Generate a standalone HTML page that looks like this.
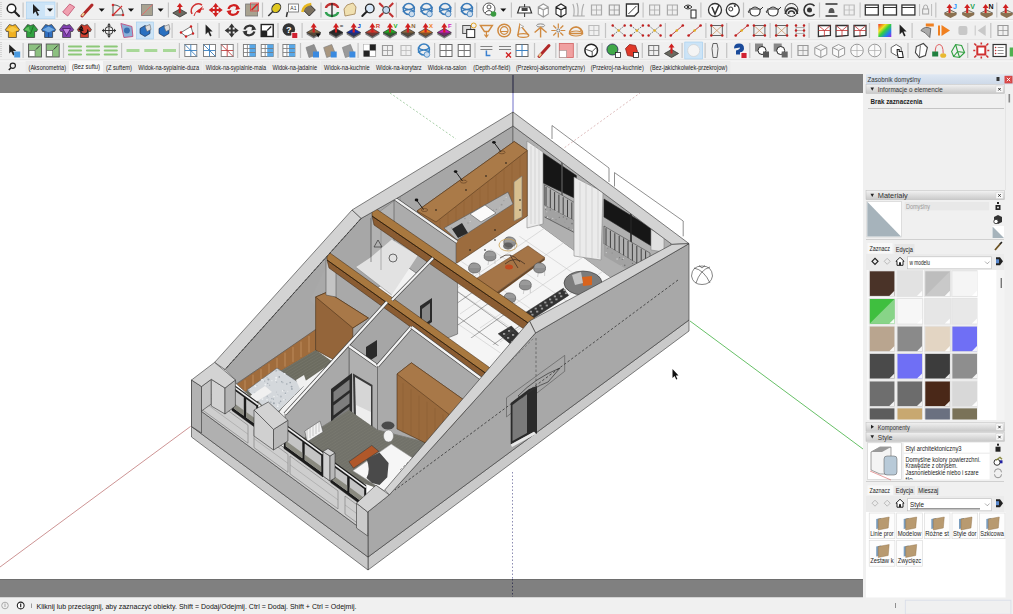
<!DOCTYPE html>
<html><head><meta charset="utf-8"><style>
html,body{margin:0;padding:0;width:1013px;height:614px;overflow:hidden;background:#f0f0f0}
svg{display:block;font-family:"Liberation Sans",sans-serif}
</style></head><body>
<svg width="1013" height="614" viewBox="0 0 1013 614">
<rect x="0" y="0" width="1013" height="614" fill="#f0f0f0"/>
<rect x="0" y="19.4" width="1013" height="0.8" fill="#d6d6d6"/><rect x="0" y="20.2" width="1013" height="1" fill="#fbfbfb"/>
<rect x="0" y="39.6" width="1013" height="0.8" fill="#d6d6d6"/><rect x="0" y="40.4" width="1013" height="1" fill="#fbfbfb"/>
<rect x="0" y="59.6" width="1013" height="0.8" fill="#d6d6d6"/><rect x="0" y="60.4" width="1013" height="1" fill="#fbfbfb"/>
<rect x="0.5" y="2" width="1" height="1" fill="#b8b8b8"/>
<rect x="0.5" y="4" width="1" height="1" fill="#b8b8b8"/>
<rect x="0.5" y="6" width="1" height="1" fill="#b8b8b8"/>
<rect x="0.5" y="8" width="1" height="1" fill="#b8b8b8"/>
<rect x="0.5" y="10" width="1" height="1" fill="#b8b8b8"/>
<rect x="0.5" y="12" width="1" height="1" fill="#b8b8b8"/>
<rect x="0.5" y="14" width="1" height="1" fill="#b8b8b8"/>
<rect x="0.5" y="16" width="1" height="1" fill="#b8b8b8"/>
<rect x="22.5" y="2.5" width="1.2" height="15" fill="#c4c4c4"/>
<rect x="56.5" y="2.5" width="1.2" height="15" fill="#c4c4c4"/>
<rect x="167.8" y="2.5" width="1.2" height="15" fill="#c4c4c4"/>
<rect x="261.9" y="2.5" width="1.2" height="15" fill="#c4c4c4"/>
<rect x="320.4" y="2.5" width="1.2" height="15" fill="#c4c4c4"/>
<rect x="395.8" y="2.5" width="1.2" height="15" fill="#c4c4c4"/>
<rect x="454.5" y="2.5" width="1.2" height="15" fill="#c4c4c4"/>
<rect x="476.1" y="2.5" width="1.2" height="15" fill="#c4c4c4"/>
<rect x="510.8" y="2.5" width="1.2" height="15" fill="#c4c4c4"/>
<rect x="642.5" y="2.5" width="1.2" height="15" fill="#c4c4c4"/>
<rect x="700.3" y="2.5" width="1.2" height="15" fill="#c4c4c4"/>
<rect x="742.9" y="2.5" width="1.2" height="15" fill="#c4c4c4"/>
<rect x="818.9" y="2.5" width="1.2" height="15" fill="#c4c4c4"/>
<rect x="859.5" y="2.5" width="1.2" height="15" fill="#c4c4c4"/>
<rect x="935.2" y="2.5" width="1.2" height="15" fill="#c4c4c4"/>
<rect x="996.2" y="2.5" width="1.2" height="15" fill="#c4c4c4"/>
<rect x="26.3" y="2" width="28.7" height="16.7" fill="#cce4f7" stroke="#a8d0f0" stroke-width="0.6"/>
<rect x="45" y="5" width="9" height="11" fill="#e6f0f8"/>
<g transform="translate(13.0,10.0)"><circle cx="-1.5" cy="-1.5" r="4.3" fill="#fff" stroke="#222" stroke-width="1.5"/><path d="M1.5 1.5 L6 6" stroke="#222" stroke-width="2.2" stroke-linecap="round"/></g>
<g transform="translate(36.0,10.0)"><path d="M-3 -6 L-3 4 L-0.5 1.5 L1.5 6 L3 5 L1 1 L4 1 Z" fill="#222"/></g>
<g transform="translate(50.0,10.0)"><path d="M-3 -1.5 L3 -1.5 L0 1.8 Z" fill="#111"/></g>
<g transform="translate(68.7,10.0)"><path d="M-6 2 L1 -6 L6 -3 L-1 6 Z" fill="#f0a0b0" stroke="#c05070" stroke-width="0.8"/></g>
<g transform="translate(88.0,10.0)"><path d="M-6 6 L4 -5" stroke="#b02828" stroke-width="3" stroke-linecap="round"/><path d="M-6 6 L-4 3" stroke="#e8d090" stroke-width="2"/></g>
<g transform="translate(101.7,10.0)"><path d="M-3 -1.5 L3 -1.5 L0 1.8 Z" fill="#111"/></g>
<g transform="translate(118.0,10.0)"><path d="M-5 5 L-5 -5 A9 9 0 0 1 5 5 Z" fill="none" stroke="#555" stroke-width="1"/><path d="M-5 5 L4 -4" stroke="#d03030" stroke-width="1.2"/><circle cx="-5" cy="5" r="1.3" fill="#d03030"/><circle cx="-5" cy="-5" r="1.3" fill="#d03030"/><circle cx="5" cy="5" r="1.3" fill="#d03030"/></g>
<g transform="translate(131.0,10.0)"><path d="M-3 -1.5 L3 -1.5 L0 1.8 Z" fill="#111"/></g>
<g transform="translate(147.0,10.0)"><rect x="-5.5" y="-5.5" width="11" height="11" fill="#a8a290" stroke="#777" stroke-width="0.8"/><path d="M-5.5 5.5 L5.5 -5.5" stroke="#e07070" stroke-width="1"/></g>
<g transform="translate(160.6,10.0)"><path d="M-3 -1.5 L3 -1.5 L0 1.8 Z" fill="#111"/></g>
<g transform="translate(179.8,10.0)"><path d="M-7 3 L0 -1 L7 3 L0 7 Z" fill="#6a6a60" stroke="#333" stroke-width="0.8"/><path d="M0 3 L0 -5" stroke="#d02020" stroke-width="2"/><path d="M-3 -3 L0 -7 L3 -3 Z" fill="#d02020"/></g>
<g transform="translate(198.0,10.0)"><path d="M-6 4 A7 7 0 0 1 4 -5" fill="none" stroke="#d03030" stroke-width="1.5"/><path d="M-2 2 L5 -4 L2 3 Z" fill="#d02020"/><path d="M-4 6 A9 9 0 0 1 6 -1" fill="none" stroke="#d03030" stroke-width="1"/></g>
<g transform="translate(215.7,10.0)"><path d="M0 -7 L3 -3 L1 -3 L1 -1 L3 -1 L3 -3 L7 0 L3 3 L3 1 L1 1 L1 3 L3 3 L0 7 L-3 3 L-1 3 L-1 1 L-3 1 L-3 3 L-7 0 L-3 -3 L-3 -1 L-1 -1 L-1 -3 L-3 -3 Z" fill="#d02020"/></g>
<g transform="translate(233.4,10.0)"><path d="M-5 -1 A5.5 5.5 0 0 1 5 -2" fill="none" stroke="#d02020" stroke-width="2.2"/><path d="M5 1 A5.5 5.5 0 0 1 -5 2" fill="none" stroke="#d02020" stroke-width="2.2"/><path d="M3 -5 L7 -1 L2 0 Z" fill="#d02020"/><path d="M-3 5 L-7 1 L-2 0 Z" fill="#d02020"/></g>
<g transform="translate(251.6,10.0)"><rect x="-6" y="-6" width="12" height="12" fill="#a8a290" stroke="#777" stroke-width="0.8"/><rect x="-1" y="-7" width="8" height="8" fill="none" stroke="#e04040" stroke-width="0.8"/><path d="M0 0 L6 -6" stroke="#e02020" stroke-width="1.6"/></g>
<g transform="translate(274.3,10.0)"><path d="M-6 6 L0 0" stroke="#333" stroke-width="1.5"/><ellipse cx="2" cy="-2" rx="4" ry="5" transform="rotate(40 2 -2)" fill="#e0c820" stroke="#333" stroke-width="1"/></g>
<g transform="translate(292.4,10.0)"><rect x="-4" y="-6" width="10" height="8" fill="#fff" stroke="#666" stroke-width="0.8"/><path d="M-5 2 L-6 7" stroke="#333" stroke-width="1.5"/><text x="1" y="0" font-size="5" fill="#333" text-anchor="middle" font-family="Liberation Sans">A1</text></g>
<g transform="translate(309.3,10.0)"><path d="M-6 0 L0 -6 L6 0 L0 6 Z" fill="#7a7060" stroke="#333" stroke-width="1"/><path d="M-7 2 Q-6 -5 2 -6" fill="none" stroke="#e8b820" stroke-width="2.5"/></g>
<g transform="translate(332.0,10.0)"><path d="M-6 -2 A6 4 0 0 1 6 -2" fill="none" stroke="#c03030" stroke-width="2.5"/><path d="M6 2 A6 4 0 0 1 -6 2" fill="none" stroke="#30a050" stroke-width="2.5"/><path d="M0 -7 L0 7" stroke="#222" stroke-width="1.3"/></g>
<g transform="translate(350.0,10.0)"><path d="M-5 6 L-6 -1 L-3 -5 L3 -7 L6 -3 L5 4 Z" fill="#f0e0b0" stroke="#a08050" stroke-width="0.8"/></g>
<g transform="translate(368.3,10.0)"><circle cx="1.5" cy="-1.5" r="4.3" fill="#d8e8f8" stroke="#222" stroke-width="1.3"/><path d="M-1.5 1.5 L-6 6" stroke="#222" stroke-width="2" stroke-linecap="round"/></g>
<g transform="translate(386.2,10.0)"><circle cx="0" cy="0" r="3.5" fill="#c0d8f0" stroke="#333" stroke-width="1"/><path d="M-7 -7 L-3 -3 M7 -7 L3 -3 M-7 7 L-3 3 M7 7 L3 3" stroke="#c03030" stroke-width="2"/></g>
<g transform="translate(408.8,10.0)"><circle cx="0" cy="-1" r="5.5" fill="none" stroke="#3a7ab8" stroke-width="1.6"/><path d="M-6 -3 Q0 2 6 -3 M-6 2 Q0 -3 6 2" stroke="#3a7ab8" stroke-width="1.6" fill="none"/><circle cx="3" cy="4" r="2.8" fill="#cde" stroke="#3a7ab8" stroke-width="0.8"/></g>
<g transform="translate(426.5,10.0)"><circle cx="0" cy="-1" r="5.5" fill="none" stroke="#3a7ab8" stroke-width="1.6"/><path d="M-6 -3 Q0 2 6 -3 M-6 2 Q0 -3 6 2" stroke="#3a7ab8" stroke-width="1.6" fill="none"/><circle cx="3" cy="4" r="2.8" fill="#cde" stroke="#3a7ab8" stroke-width="0.8"/></g>
<g transform="translate(445.2,10.0)"><circle cx="0" cy="-1" r="5.5" fill="none" stroke="#3a7ab8" stroke-width="1.6"/><path d="M-6 -3 Q0 2 6 -3 M-6 2 Q0 -3 6 2" stroke="#3a7ab8" stroke-width="1.6" fill="none"/><circle cx="3" cy="4" r="2.8" fill="#cde" stroke="#3a7ab8" stroke-width="0.8"/></g>
<g transform="translate(466.9,10.0)"><circle cx="0" cy="-1" r="5.5" fill="none" stroke="#3a7ab8" stroke-width="1.6"/><path d="M-6 -3 Q0 2 6 -3 M-6 2 Q0 -3 6 2" stroke="#3a7ab8" stroke-width="1.6" fill="none"/><circle cx="3" cy="4" r="2.8" fill="#cde" stroke="#3a7ab8" stroke-width="0.8"/></g>
<g transform="translate(490.0,10.0)"><circle cx="-1" cy="-1" r="6" fill="#fff" stroke="#555" stroke-width="1"/><circle cx="-1" cy="-3" r="2" fill="none" stroke="#555" stroke-width="1"/><path d="M-5 3 Q-1 -2 3 3" fill="none" stroke="#555" stroke-width="1"/><circle cx="3.5" cy="4" r="2.8" fill="#3a9a40"/></g>
<g transform="translate(503.3,10.0)"><path d="M-3 -1.5 L3 -1.5 L0 1.8 Z" fill="#111"/></g>
<g transform="translate(524.6,10.0)"><path d="M-7 3 L-5 -3 L5 -3 L7 3 Z" fill="#fff" stroke="#333" stroke-width="1.2"/><rect x="-3" y="-2" width="6" height="3" fill="#444"/><path d="M0 3 L0 7 M0 -3 L0 -6" stroke="#333" stroke-width="1"/></g>
<g transform="translate(543.3,10.0)"><path d="M-5 -3 L0 -6 L5 -3 L5 4 L0 7 L-5 4 Z M-5 -3 L0 0 L5 -3 M0 0 L0 7" fill="#fff" stroke="#999" stroke-width="1.1"/></g>
<g transform="translate(561.0,10.0)"><path d="M-5 -3 L0 -6 L5 -3 L5 4 L0 7 L-5 4 Z M-5 -3 L0 0 L5 -3 M0 0 L0 7" fill="#fff" stroke="#222" stroke-width="1.1"/></g>
<g transform="translate(578.8,10.0)"><path d="M-5 6 Q-4 -2 -6 -6 M-1 6 Q0 -3 -2 -7 M3 6 Q3 -2 5 -6 M-6 6 L6 6" fill="none" stroke="#aaa" stroke-width="1.1"/></g>
<g transform="translate(596.5,10.0)"><path d="M-5 -5 L5 -5 L5 5 L-5 5 Z" fill="none" stroke="#aaa" stroke-width="1.2"/><path d="M-5 0 L5 0 M0 -5 L0 5" stroke="#aaa" stroke-width="0.8"/></g>
<g transform="translate(614.3,10.0)"><path d="M-5 -5 L5 -5 L5 5 L-5 5 Z" fill="none" stroke="#999" stroke-width="1.2"/><path d="M-5 0 L5 0 M0 -5 L0 5" stroke="#999" stroke-width="0.8"/></g>
<g transform="translate(632.4,10.0)"><path d="M-6 -6 L6 -6 L6 2 L2 6 L-6 6 Z" fill="#fff" stroke="#333" stroke-width="1.3"/><path d="M-4 4 L4 -4" stroke="#333" stroke-width="1"/></g>
<g transform="translate(654.6,10.0)"><path d="M-5 -5 L5 -5 L5 5 L-5 5 Z" fill="none" stroke="#aaa" stroke-width="1.2"/><path d="M-5 0 L5 0 M0 -5 L0 5" stroke="#aaa" stroke-width="0.8"/></g>
<g transform="translate(672.4,10.0)"><path d="M-5 -5 L5 -5 L5 5 L-5 5 Z" fill="none" stroke="#aaa" stroke-width="1.2"/><path d="M-5 0 L5 0 M0 -5 L0 5" stroke="#aaa" stroke-width="0.8"/></g>
<g transform="translate(691.0,10.0)"><path d="M-7 -3 Q-3 -7 1 -3 Q-3 1 -7 -3 Z" fill="#fff" stroke="#333" stroke-width="1"/><circle cx="-3" cy="-3" r="1.3" fill="#333"/><rect x="0" y="0" width="5" height="8" fill="#fff" stroke="#333" stroke-width="1.1"/></g>
<g transform="translate(715.0,10.0)"><circle cx="0" cy="0" r="6.5" fill="#fff" stroke="#333" stroke-width="1.3"/><path d="M-3 -3 L0 4 L4 -5" fill="none" stroke="#333" stroke-width="1.6"/></g>
<g transform="translate(732.8,10.0)"><circle cx="0" cy="0" r="6.5" fill="#fff" stroke="#333" stroke-width="1.3"/><circle cx="-2" cy="-1" r="2" fill="none" stroke="#333" stroke-width="1"/><circle cx="2" cy="-4" r="1" fill="#333"/></g>
<g transform="translate(755.0,10.0)"><path d="M-5 -1 Q-6 6 0 6 Q6 6 5 -1 Z" fill="#fff" stroke="#333" stroke-width="1.2"/><path d="M-4 -1 Q0 -5 4 -1 M5 0 L8 -3 M-5 0 Q-8 1 -6 3" fill="none" stroke="#333" stroke-width="1"/></g>
<g transform="translate(773.0,10.0)"><path d="M-5 -1 Q-6 6 0 6 Q6 6 5 -1 Z" fill="#fff" stroke="#333" stroke-width="1.2"/><path d="M-4 -1 Q0 -5 4 -1 M5 0 L8 -3 M-5 0 Q-8 1 -6 3" fill="none" stroke="#333" stroke-width="1"/></g>
<g transform="translate(791.4,10.0)"><path d="M-6 4 A6 6 0 0 1 6 4" fill="none" stroke="#333" stroke-width="1.8"/><path d="M-3 4 A3 3 0 0 1 3 4" fill="none" stroke="#333" stroke-width="1.5"/><circle cx="0" cy="0" r="6.5" fill="none" stroke="#333" stroke-width="1"/></g>
<g transform="translate(809.5,10.0)"><path d="M5 -4 A6 6 0 1 0 5 4" fill="none" stroke="#333" stroke-width="1.6"/><circle cx="0" cy="0" r="2.5" fill="#333"/></g>
<g transform="translate(831.5,10.0)"><path d="M-6 -6 L6 -6 M-6 6 L6 6" stroke="#333" stroke-width="1.3"/><path d="M-3 3 Q-3 -2 0 -2 Q3 -2 3 3 Z" fill="#555"/></g>
<g transform="translate(849.2,10.0)"><path d="M-5 -5 L5 -5 L5 5 L-5 5 Z" fill="none" stroke="#bbb" stroke-width="1.2"/><path d="M-5 0 L5 0 M0 -5 L0 5" stroke="#bbb" stroke-width="0.8"/></g>
<g transform="translate(871.8,10.0)"><rect x="-6.5" y="-5" width="13" height="10" fill="#fff" stroke="#333" stroke-width="1.3"/><path d="M-6.5 -2.5 L6.5 -2.5" stroke="#333" stroke-width="1"/></g>
<g transform="translate(890.0,10.0)"><rect x="-6.5" y="-5" width="13" height="10" fill="#fff" stroke="#333" stroke-width="1.3"/><path d="M-6.5 -2.5 L6.5 -2.5" stroke="#333" stroke-width="1"/></g>
<g transform="translate(908.4,10.0)"><rect x="-6.5" y="-5" width="13" height="10" fill="#fff" stroke="#333" stroke-width="1.3"/><path d="M-6.5 -2.5 L6.5 -2.5" stroke="#333" stroke-width="1"/></g>
<g transform="translate(925.6,10.0)"><path d="M-6 -6 L-6 6 M6 -6 L6 6" stroke="#bbb" stroke-width="1"/><rect x="-3" y="-1" width="6" height="5" fill="none" stroke="#aaa" stroke-width="1.1"/><path d="M-2 -1 L-2 -3 A2 2 0 0 1 2 -3 L2 -1" fill="none" stroke="#aaa"/></g>
<g transform="translate(950.5,10.0)"><path d="M-6 3 L0 0 L6 3 L0 6 Z" fill="#d8c8a8" stroke="#555" stroke-width="0.8"/><path d="M-6 3 L-6 5 L0 8 L6 5 L6 3" fill="#8a7050"/><path d="M-1 3 L-1 -3" stroke="#d02020" stroke-width="2"/><path d="M-4 -2 L-1 -6 L2 -2 Z" fill="#d02020"/><text x="4.5" y="-1" font-size="7" font-weight="bold" fill="#1e90ff" text-anchor="middle" font-family="Liberation Sans">J</text></g>
<g transform="translate(968.2,10.0)"><path d="M-6 3 L0 0 L6 3 L0 6 Z" fill="#d8c8a8" stroke="#555" stroke-width="0.8"/><path d="M-6 3 L-6 5 L0 8 L6 5 L6 3" fill="#8a7050"/><path d="M-1 3 L-1 -3" stroke="#d02020" stroke-width="2"/><path d="M-4 -2 L-1 -6 L2 -2 Z" fill="#d02020"/><text x="4.5" y="-1" font-size="7" font-weight="bold" fill="#20a050" text-anchor="middle" font-family="Liberation Sans">V</text></g>
<g transform="translate(986.6,10.0)"><path d="M-6 3 L0 0 L6 3 L0 6 Z" fill="#d8c8a8" stroke="#555" stroke-width="0.8"/><path d="M-6 3 L-6 5 L0 8 L6 5 L6 3" fill="#8a7050"/><path d="M-1 3 L-1 -3" stroke="#d02020" stroke-width="2"/><path d="M-4 -2 L-1 -6 L2 -2 Z" fill="#d02020"/><text x="4.5" y="-1" font-size="7" font-weight="bold" fill="#111" text-anchor="middle" font-family="Liberation Sans">N</text></g>
<g transform="translate(1006.7,10.0)"><path d="M-6 3 L0 0 L6 3 L0 6 Z" fill="#d8c8a8" stroke="#555" stroke-width="0.8"/><path d="M-6 3 L-6 5 L0 8 L6 5 L6 3" fill="#8a7050"/><path d="M-1 3 L-1 -3" stroke="#d02020" stroke-width="2"/><path d="M-4 -2 L-1 -6 L2 -2 Z" fill="#d02020"/><text x="4.5" y="-1" font-size="7" font-weight="bold" fill="#333" text-anchor="middle" font-family="Liberation Sans"></text></g>
<rect x="0.5" y="22" width="1" height="1" fill="#b8b8b8"/>
<rect x="0.5" y="24" width="1" height="1" fill="#b8b8b8"/>
<rect x="0.5" y="26" width="1" height="1" fill="#b8b8b8"/>
<rect x="0.5" y="28" width="1" height="1" fill="#b8b8b8"/>
<rect x="0.5" y="30" width="1" height="1" fill="#b8b8b8"/>
<rect x="0.5" y="32" width="1" height="1" fill="#b8b8b8"/>
<rect x="0.5" y="34" width="1" height="1" fill="#b8b8b8"/>
<rect x="0.5" y="36" width="1" height="1" fill="#b8b8b8"/>
<rect x="94.3" y="23.0" width="1.2" height="15" fill="#c4c4c4"/>
<rect x="171.5" y="23.0" width="1.2" height="15" fill="#c4c4c4"/>
<rect x="197.1" y="23.0" width="1.2" height="15" fill="#c4c4c4"/>
<rect x="218.5" y="23.0" width="1.2" height="15" fill="#c4c4c4"/>
<rect x="277.4" y="23.0" width="1.2" height="15" fill="#c4c4c4"/>
<rect x="301.5" y="23.0" width="1.2" height="15" fill="#c4c4c4"/>
<rect x="455.3" y="23.0" width="1.2" height="15" fill="#c4c4c4"/>
<rect x="604.9" y="23.0" width="1.2" height="15" fill="#c4c4c4"/>
<rect x="664.8" y="23.0" width="1.2" height="15" fill="#c4c4c4"/>
<rect x="705.3" y="23.0" width="1.2" height="15" fill="#c4c4c4"/>
<rect x="726.1" y="23.0" width="1.2" height="15" fill="#c4c4c4"/>
<rect x="769.5" y="23.0" width="1.2" height="15" fill="#c4c4c4"/>
<rect x="808.5" y="23.0" width="1.2" height="15" fill="#c4c4c4"/>
<rect x="868.9" y="23.0" width="1.2" height="15" fill="#c4c4c4"/>
<rect x="911.5" y="23.0" width="1.2" height="15" fill="#c4c4c4"/>
<rect x="990.2" y="23.0" width="1.2" height="15" fill="#c4c4c4"/>
<g transform="translate(12.4,30.5)"><path d="M-7 -1 L-3 -6 L0 -5 L3 -6 L7 -1 L6 1 L4 1 L4 7 L-4 7 L-4 1 L-6 1 Z" fill="#f0b020" stroke="#333" stroke-width="0.7"/></g><g transform="translate(12.4,30.5)"><path d="M-6 -1 L0 -4 L6 -1 L0 2 Z" fill="#f8d050" opacity="0.8"/></g>
<g transform="translate(30.6,30.5)"><path d="M-7 -1 L-3 -6 L0 -5 L3 -6 L7 -1 L6 1 L4 1 L4 7 L-4 7 L-4 1 L-6 1 Z" fill="#30a040" stroke="#333" stroke-width="0.7"/></g><g transform="translate(30.6,30.5)"><path d="M-3 -5 L0 3 L3 -5" fill="none" stroke="#1a6a20" stroke-width="0.8"/><path d="M-6 -1 L-2 -4 L0 2 Z" fill="#60c060"/></g>
<g transform="translate(48.6,30.5)"><path d="M-7 -1 L-3 -6 L0 -5 L3 -6 L7 -1 L6 1 L4 1 L4 7 L-4 7 L-4 1 L-6 1 Z" fill="#3070c0" stroke="#333" stroke-width="0.7"/></g><g transform="translate(48.6,30.5)"><path d="M-6 -1 L0 -4 L6 -1 L0 2 Z" fill="#70a8e0"/><path d="M0 2 L0 7" stroke="#1a3a80" stroke-width="0.8"/></g>
<g transform="translate(66.6,30.5)"><path d="M-7 -1 L-3 -6 L0 -5 L3 -6 L7 -1 L6 1 L4 1 L4 7 L-4 7 L-4 1 L-6 1 Z" fill="#8040b0" stroke="#333" stroke-width="0.7"/></g><g transform="translate(66.6,30.5)"><path d="M-4 -2 L4 -2 L0 5 Z" fill="#c080e0" stroke="#3a1050" stroke-width="0.7"/></g>
<g transform="translate(84.4,30.5)"><path d="M-7 -1 L-3 -6 L0 -5 L3 -6 L7 -1 L6 1 L4 1 L4 7 L-4 7 L-4 1 L-6 1 Z" fill="#d04030" stroke="#333" stroke-width="0.7"/></g><g transform="translate(84.4,30.5)"><path d="M3 -1 A3.5 3 0 1 1 -2 -2 L-3 -4 L-5 -1 L-1 0" fill="none" stroke="#111" stroke-width="1.3"/></g>
<g transform="translate(109.0,30.5)"><circle cx="0" cy="0" r="4" fill="none" stroke="#333" stroke-width="1"/><path d="M-7 0 L7 0 M0 -7 L0 7" stroke="#333" stroke-width="1"/><path d="M-7 0 L-5 -2 L-5 2 Z M7 0 L5 -2 L5 2 Z M0 -7 L-2 -5 L2 -5 Z M0 7 L-2 5 L2 5 Z" fill="#333"/></g>
<g transform="translate(126.9,30.5)"><path d="M-6 -7 L5 -4 L6 6 L-3 7 Z" fill="#8ab0d8" stroke="#c05080" stroke-width="0.9"/><circle cx="0" cy="0" r="3" fill="#3a70b0"/></g>
<rect x="136.4" y="22" width="17" height="17" fill="#cce4f7" stroke="#a0ccee" stroke-width="0.6"/><g transform="translate(145.0,30.5)"><path d="M-5 -2 L0 -5 L5 -2 L5 3 L0 6 L-5 3 Z" fill="#2a70c0" stroke="#124" stroke-width="0.6"/><path d="M0 -4 L5 -6 L6 -1 L2 1 Z" fill="#ddd" stroke="#555" stroke-width="0.5"/></g>
<g transform="translate(164.0,30.5)"><path d="M-5 -2 L0 -5 L5 -2 L5 3 L0 6 L-5 3 Z" fill="#2a70c0" stroke="#124" stroke-width="0.6"/><path d="M0 -4 L5 -6 L6 -1 L2 1 Z" fill="#ddd" stroke="#555" stroke-width="0.5"/></g>
<g transform="translate(187.0,30.5)"><path d="M-6 2 L4 -4 L6 3 L-1 6 Z" fill="#fff" stroke="#555" stroke-width="0.8"/><circle cx="-6" cy="2" r="1.2" fill="#d02020"/><circle cx="4" cy="-4" r="1.2" fill="#d02020"/><circle cx="6" cy="3" r="1.2" fill="#d02020"/><circle cx="-1" cy="6" r="1.2" fill="#d02020"/></g>
<g transform="translate(208.6,30.5)"><path d="M-3 -6 L-3 4 L-0.5 1.5 L1.5 6 L3 5 L1 1 L4 1 Z" fill="#222"/></g>
<g transform="translate(231.7,30.5)"><path d="M0 -7 L3 -3 L1 -3 L1 -1 L3 -1 L3 -3 L7 0 L3 3 L3 1 L1 1 L1 3 L3 3 L0 7 L-3 3 L-1 3 L-1 1 L-3 1 L-3 3 L-7 0 L-3 -3 L-3 -1 L-1 -1 L-1 -3 L-3 -3 Z" fill="#333"/></g>
<g transform="translate(249.4,30.5)"><path d="M-5 -1 A5.5 5.5 0 0 1 5 -2" fill="none" stroke="#333" stroke-width="2.2"/><path d="M5 1 A5.5 5.5 0 0 1 -5 2" fill="none" stroke="#333" stroke-width="2.2"/><path d="M3 -5 L7 -1 L2 0 Z" fill="#333"/><path d="M-3 5 L-7 1 L-2 0 Z" fill="#333"/></g>
<g transform="translate(267.2,30.5)"><rect x="-6" y="-6" width="12" height="12" fill="#fff" stroke="#222" stroke-width="1.4"/><rect x="-6" y="0" width="6" height="6" fill="#222"/><path d="M0 0 L4 -4" stroke="#222" stroke-width="1.2"/></g>
<g transform="translate(289.8,30.5)"><circle cx="-1" cy="-1" r="6.3" fill="#333"/><text x="-1" y="2.5" font-size="9" font-weight="bold" fill="#fff" text-anchor="middle" font-family="Liberation Sans">?</text><rect x="2" y="2" width="6" height="6" fill="#d02030" stroke="#fff" stroke-width="0.8"/></g>
<g transform="translate(313.7,30.5)"><path d="M-7 2 L0 -2 L7 2 L0 6 Z" fill="#8b6a40" stroke="#333" stroke-width="0.7"/><path d="M-7 2 L-7 4 L0 8 L7 4 L7 2" fill="#333" opacity="0.6"/><path d="M0 2 L0 -4" stroke="#d02020" stroke-width="2.2"/><path d="M-3 -3 L0 -7.5 L3 -3 Z" fill="#d02020"/><path d="M2 3 L7 3 L4.5 7 Z" fill="#111"/><text x="5.5" y="-3" font-size="6" font-weight="bold" fill="#8b6a40" text-anchor="middle" font-family="Liberation Sans"></text></g>
<g transform="translate(336.0,30.5)"><path d="M-7 2 L0 -2 L7 2 L0 6 Z" fill="#222" stroke="#333" stroke-width="0.7"/><path d="M-7 2 L-7 4 L0 8 L7 4 L7 2" fill="#333" opacity="0.6"/><path d="M0 2 L0 -4" stroke="#d02020" stroke-width="2.2"/><path d="M-3 -3 L0 -7.5 L3 -3 Z" fill="#d02020"/><text x="5.5" y="-3" font-size="6" font-weight="bold" fill="#333" text-anchor="middle" font-family="Liberation Sans">=</text></g>
<g transform="translate(353.7,30.5)"><path d="M-7 2 L0 -2 L7 2 L0 6 Z" fill="#1030c0" stroke="#333" stroke-width="0.7"/><path d="M-7 2 L-7 4 L0 8 L7 4 L7 2" fill="#333" opacity="0.6"/><path d="M0 2 L0 -4" stroke="#d02020" stroke-width="2.2"/><path d="M-3 -3 L0 -7.5 L3 -3 Z" fill="#d02020"/><text x="5.5" y="-3" font-size="6" font-weight="bold" fill="#1030c0" text-anchor="middle" font-family="Liberation Sans">J</text></g>
<g transform="translate(372.4,30.5)"><path d="M-7 2 L0 -2 L7 2 L0 6 Z" fill="#d04030" stroke="#333" stroke-width="0.7"/><path d="M-7 2 L-7 4 L0 8 L7 4 L7 2" fill="#333" opacity="0.6"/><path d="M0 2 L0 -4" stroke="#d02020" stroke-width="2.2"/><path d="M-3 -3 L0 -7.5 L3 -3 Z" fill="#d02020"/><text x="5.5" y="-3" font-size="6" font-weight="bold" fill="#d04030" text-anchor="middle" font-family="Liberation Sans">R</text></g>
<g transform="translate(390.0,30.5)"><path d="M-7 2 L0 -2 L7 2 L0 6 Z" fill="#20b020" stroke="#333" stroke-width="0.7"/><path d="M-7 2 L-7 4 L0 8 L7 4 L7 2" fill="#333" opacity="0.6"/><path d="M0 2 L0 -4" stroke="#d02020" stroke-width="2.2"/><path d="M-3 -3 L0 -7.5 L3 -3 Z" fill="#d02020"/><text x="5.5" y="-3" font-size="6" font-weight="bold" fill="#20b020" text-anchor="middle" font-family="Liberation Sans">V</text></g>
<g transform="translate(407.9,30.5)"><path d="M-7 2 L0 -2 L7 2 L0 6 Z" fill="#8b6a40" stroke="#333" stroke-width="0.7"/><path d="M-7 2 L-7 4 L0 8 L7 4 L7 2" fill="#333" opacity="0.6"/><path d="M0 2 L0 -4" stroke="#d02020" stroke-width="2.2"/><path d="M-3 -3 L0 -7.5 L3 -3 Z" fill="#d02020"/><text x="5.5" y="-3" font-size="6" font-weight="bold" fill="#8b6a40" text-anchor="middle" font-family="Liberation Sans">N</text></g>
<g transform="translate(425.6,30.5)"><path d="M-7 2 L0 -2 L7 2 L0 6 Z" fill="#f08020" stroke="#333" stroke-width="0.7"/><path d="M-7 2 L-7 4 L0 8 L7 4 L7 2" fill="#333" opacity="0.6"/><path d="M0 2 L0 -4" stroke="#d02020" stroke-width="2.2"/><path d="M-3 -3 L0 -7.5 L3 -3 Z" fill="#d02020"/><text x="5.5" y="-3" font-size="6" font-weight="bold" fill="#f08020" text-anchor="middle" font-family="Liberation Sans">X</text></g>
<g transform="translate(444.3,30.5)"><path d="M-7 2 L0 -2 L7 2 L0 6 Z" fill="#d020c0" stroke="#333" stroke-width="0.7"/><path d="M-7 2 L-7 4 L0 8 L7 4 L7 2" fill="#333" opacity="0.6"/><path d="M0 2 L0 -4" stroke="#d02020" stroke-width="2.2"/><path d="M-3 -3 L0 -7.5 L3 -3 Z" fill="#d02020"/><text x="5.5" y="-3" font-size="6" font-weight="bold" fill="#d020c0" text-anchor="middle" font-family="Liberation Sans">F</text></g>
<g transform="translate(468.7,30.5)"><rect x="-6" y="-5" width="8" height="8" fill="#ddd" stroke="#555" stroke-width="1"/><rect x="-2" y="-1" width="8" height="8" fill="#fff" stroke="#333" stroke-width="1.1"/><circle cx="5" cy="-5" r="2.5" fill="none" stroke="#e0a020" stroke-width="1"/></g>
<g transform="translate(486.4,30.5)"><path d="M-6 -5 L6 -5 L2 1 L-2 1 Z" fill="none" stroke="#d08a40" stroke-width="1.4"/><path d="M0 1 L0 6 M-2 4 L0 6.5 L2 4" fill="none" stroke="#d08a40" stroke-width="1.2"/></g>
<g transform="translate(504.2,30.5)"><circle r="6.3" fill="none" stroke="#d08a40" stroke-width="1.5"/><circle r="3.8" fill="none" stroke="#d08a40" stroke-width="1.2"/><path d="M-3.5 1 L3.5 1" stroke="#d08a40" stroke-width="1"/></g>
<g transform="translate(522.8,30.5)"><path d="M-5 5 L-3 -6 L6 5" fill="none" stroke="#d08a40" stroke-width="1.4"/><ellipse cx="0.5" cy="5" rx="5.5" ry="1.8" fill="none" stroke="#d08a40" stroke-width="1.2"/><path d="M-3 -6 L1 -4 L-2.5 -2.5" fill="#fff" stroke="#999" stroke-width="0.7"/></g>
<g transform="translate(540.6,30.5)"><ellipse cx="0" cy="-5" rx="4" ry="1.6" fill="none" stroke="#888" stroke-width="1"/><path d="M0 -4 L0 7 M-6 2 L0 -3 L6 2" fill="none" stroke="#d08a40" stroke-width="1.4"/></g>
<g transform="translate(558.3,30.5)"><path d="M0 -7 L0 -2.5 M0 2.5 L0 7 M-7 0 L-2.5 0 M2.5 0 L7 0 M-5 -5 L-2 -2 M5 5 L2 2 M5 -5 L2 -2 M-5 5 L-2 2" stroke="#d08a40" stroke-width="1.2"/><circle r="1.6" fill="none" stroke="#666" stroke-width="0.8"/></g>
<g transform="translate(576.0,30.5)"><path d="M-6.5 3 A6.5 6.5 0 0 1 6.5 3 Z" fill="none" stroke="#d08a40" stroke-width="1.5"/><ellipse cx="0" cy="3" rx="6.5" ry="2.5" fill="none" stroke="#d08a40" stroke-width="1.2"/><path d="M-2 -3 A5 5 0 0 1 5 1" fill="none" stroke="#d08a40" stroke-width="0.9"/></g>
<g transform="translate(593.9,30.5)"><path d="M-5 -5 L5 -5 L5 5 L-5 5 Z" fill="none" stroke="#bbb" stroke-width="1.2"/><path d="M-5 0 L5 0 M0 -5 L0 5" stroke="#bbb" stroke-width="0.8"/></g>
<g transform="translate(618.7,30.5)"><path d="M-6 -5 L6 5 M6 -5 L-6 5" stroke="#555" stroke-width="0.8" stroke-dasharray="1.5 1"/><circle cx="-6" cy="-5" r="1.2" fill="#c02020"/><circle cx="6" cy="-5" r="1.2" fill="#c02020"/><circle cx="-6" cy="5" r="1.2" fill="#c02020"/><circle cx="6" cy="5" r="1.2" fill="#c02020"/><circle cx="0" cy="0" r="1.3" fill="#e0b020"/></g>
<g transform="translate(636.9,30.5)"><path d="M-6 -5 L6 5 M6 -5 L-6 5" stroke="#555" stroke-width="0.8" stroke-dasharray="1.5 1"/><circle cx="-6" cy="-5" r="1.2" fill="#c02020"/><circle cx="6" cy="-5" r="1.2" fill="#c02020"/><circle cx="-6" cy="5" r="1.2" fill="#c02020"/><circle cx="6" cy="5" r="1.2" fill="#c02020"/><circle cx="0" cy="0" r="1.3" fill="#e0b020"/></g>
<g transform="translate(654.6,30.5)"><path d="M-6 -5 L6 5 M6 -5 L-6 5" stroke="#555" stroke-width="0.8" stroke-dasharray="1.5 1"/><circle cx="-6" cy="-5" r="1.2" fill="#c02020"/><circle cx="6" cy="-5" r="1.2" fill="#c02020"/><circle cx="-6" cy="5" r="1.2" fill="#c02020"/><circle cx="6" cy="5" r="1.2" fill="#c02020"/><circle cx="0" cy="0" r="1.3" fill="#e0b020"/></g>
<g transform="translate(676.8,30.5)"><path d="M-6 5 L6 -5" stroke="#c04040" stroke-width="1"/><circle cx="-6" cy="5" r="1.3" fill="#c02020"/><circle cx="6" cy="-5" r="1.3" fill="#c02020"/><circle cx="0" cy="0" r="1.3" fill="#e0b020"/></g>
<g transform="translate(694.6,30.5)"><path d="M-6 5 L6 -5" stroke="#c04040" stroke-width="1"/><circle cx="-6" cy="5" r="1.3" fill="#c02020"/><circle cx="6" cy="-5" r="1.3" fill="#c02020"/><circle cx="0" cy="0" r="1.3" fill="#e0b020"/></g>
<g transform="translate(716.8,30.5)"><rect x="-5.5" y="-5" width="11" height="10" fill="none" stroke="#555" stroke-width="0.9"/><path d="M-5.5 -5 L5.5 5 M5.5 -5 L-5.5 5" stroke="#c08040" stroke-width="0.6"/><circle cx="-5.5" cy="-5" r="1.2" fill="#c02020"/><circle cx="5.5" cy="-5" r="1.2" fill="#c02020"/><circle cx="-5.5" cy="5" r="1.2" fill="#c02020"/><circle cx="5.5" cy="5" r="1.2" fill="#c02020"/></g>
<g transform="translate(741.7,30.5)"><path d="M-6 5 L6 -5" stroke="#c04040" stroke-width="1"/><circle cx="-6" cy="5" r="1.3" fill="#c02020"/><circle cx="6" cy="-5" r="1.3" fill="#c02020"/><circle cx="0" cy="0" r="1.3" fill="#e0b020"/></g>
<g transform="translate(759.4,30.5)"><rect x="-5.5" y="-5" width="11" height="10" fill="none" stroke="#555" stroke-width="0.9"/><path d="M-5.5 -5 L5.5 5 M5.5 -5 L-5.5 5" stroke="#c08040" stroke-width="0.6"/><circle cx="-5.5" cy="-5" r="1.2" fill="#c02020"/><circle cx="5.5" cy="-5" r="1.2" fill="#c02020"/><circle cx="-5.5" cy="5" r="1.2" fill="#c02020"/><circle cx="5.5" cy="5" r="1.2" fill="#c02020"/></g>
<g transform="translate(781.6,30.5)"><rect x="-5.5" y="-5" width="11" height="10" fill="none" stroke="#555" stroke-width="0.9"/><path d="M-5.5 -5 L5.5 5 M5.5 -5 L-5.5 5" stroke="#c08040" stroke-width="0.6"/><circle cx="-5.5" cy="-5" r="1.2" fill="#c02020"/><circle cx="5.5" cy="-5" r="1.2" fill="#c02020"/><circle cx="-5.5" cy="5" r="1.2" fill="#c02020"/><circle cx="5.5" cy="5" r="1.2" fill="#c02020"/></g>
<g transform="translate(800.0,30.5)"><path d="M-4 -6 L-4 6 M4 -6 L4 6 M-4 -3 L4 -3 M-4 0 L4 0 M-4 3 L4 3" stroke="#999" stroke-width="0.7"/><circle cx="-4" cy="-5" r="1.2" fill="#c02020"/><circle cx="-4" cy="0" r="1.2" fill="#c02020"/><circle cx="-4" cy="5" r="1.2" fill="#c02020"/><circle cx="4" cy="-5" r="1.2" fill="#c02020"/><circle cx="4" cy="0" r="1.2" fill="#c02020"/><circle cx="4" cy="5" r="1.2" fill="#c02020"/></g>
<g transform="translate(824.4,30.5)"><path d="M-6 -5 L6 -5 L6 5 L-6 6 Z" fill="#fff" stroke="#333" stroke-width="1.3"/><path d="M-6 -5 L0 0 L6 -5 M0 0 L0 6 M-6 0 L6 0" fill="none" stroke="#c03030" stroke-width="0.8"/></g>
<g transform="translate(842.0,30.5)"><path d="M-6 -5 L6 -5 L6 5 L-6 6 Z" fill="#fff" stroke="#333" stroke-width="1.3"/><path d="M-6 -5 L0 0 L6 -5 M0 0 L0 6 M-6 0 L6 0" fill="none" stroke="#c03030" stroke-width="0.8"/></g>
<g transform="translate(860.0,30.5)"><path d="M-6 -5 L6 -5 L6 5 L-6 6 Z" fill="#fff" stroke="#333" stroke-width="1.3"/><path d="M-6 -5 L0 0 L6 -5 M0 0 L0 6 M-6 0 L6 0" fill="none" stroke="#c03030" stroke-width="0.8"/></g>
<g transform="translate(884.8,30.5)"><defs><linearGradient id="rb" x1="0" y1="0" x2="1" y2="1"><stop offset="0" stop-color="#f03020"/><stop offset="0.3" stop-color="#f0e020"/><stop offset="0.5" stop-color="#30d040"/><stop offset="0.75" stop-color="#2080f0"/><stop offset="1" stop-color="#a020e0"/></linearGradient></defs><rect x="-6.5" y="-6.5" width="13" height="13" fill="url(#rb)"/></g>
<g transform="translate(902.6,30.5)"><path d="M-3 -6 L-3 4 L-0.5 1.5 L1.5 6 L3 5 L1 1 L4 1 Z" fill="#222"/></g>
<g transform="translate(926.8,30.5)"><path d="M-6 0 Q-2 -5 4 -2 L3 7 Q-2 1 -6 0 Z" fill="#aaa" stroke="#555" stroke-width="0.8"/><rect x="-1" y="-7" width="8" height="3" fill="#f08020"/></g>
<g transform="translate(944.0,30.5)"><rect x="-6" y="-5" width="2" height="10" fill="#f08020"/><path d="M-2.5 -5.5 L6 0 L-2.5 5.5 Z" fill="#f08020"/></g>
<g transform="translate(962.9,30.5)"><rect x="-4.5" y="-4.5" width="9" height="9" rx="2" fill="#c8c8c8"/></g>
<g transform="translate(980.7,30.5)"><rect x="-6" y="-5" width="1" height="10" fill="#c8c8c8"/><path d="M5 -5.5 L-3 0 L5 5.5 Z" fill="#c8c8c8"/></g>
<g transform="translate(1003.0,30.5)"><path d="M-5 -5 L5 -5 L5 5 L-5 5 Z" fill="none" stroke="#999" stroke-width="1.2"/><path d="M-5 0 L5 0 M0 -5 L0 5" stroke="#999" stroke-width="0.8"/></g>
<rect x="0.5" y="42" width="1" height="1" fill="#b8b8b8"/>
<rect x="0.5" y="44" width="1" height="1" fill="#b8b8b8"/>
<rect x="0.5" y="46" width="1" height="1" fill="#b8b8b8"/>
<rect x="0.5" y="48" width="1" height="1" fill="#b8b8b8"/>
<rect x="0.5" y="50" width="1" height="1" fill="#b8b8b8"/>
<rect x="0.5" y="52" width="1" height="1" fill="#b8b8b8"/>
<rect x="0.5" y="54" width="1" height="1" fill="#b8b8b8"/>
<rect x="0.5" y="56" width="1" height="1" fill="#b8b8b8"/>
<rect x="22.5" y="43.0" width="1.2" height="15" fill="#c4c4c4"/>
<rect x="62.9" y="43.0" width="1.2" height="15" fill="#c4c4c4"/>
<rect x="121.0" y="43.0" width="1.2" height="15" fill="#c4c4c4"/>
<rect x="178.8" y="43.0" width="1.2" height="15" fill="#c4c4c4"/>
<rect x="237.0" y="43.0" width="1.2" height="15" fill="#c4c4c4"/>
<rect x="277.4" y="43.0" width="1.2" height="15" fill="#c4c4c4"/>
<rect x="299.9" y="43.0" width="1.2" height="15" fill="#c4c4c4"/>
<rect x="357.5" y="43.0" width="1.2" height="15" fill="#c4c4c4"/>
<rect x="434.0" y="43.0" width="1.2" height="15" fill="#c4c4c4"/>
<rect x="474.4" y="43.0" width="1.2" height="15" fill="#c4c4c4"/>
<rect x="533.9" y="43.0" width="1.2" height="15" fill="#c4c4c4"/>
<rect x="555.2" y="43.0" width="1.2" height="15" fill="#c4c4c4"/>
<rect x="576.5" y="43.0" width="1.2" height="15" fill="#c4c4c4"/>
<rect x="601.4" y="43.0" width="1.2" height="15" fill="#c4c4c4"/>
<rect x="641.7" y="43.0" width="1.2" height="15" fill="#c4c4c4"/>
<rect x="681.5" y="43.0" width="1.2" height="15" fill="#c4c4c4"/>
<rect x="704.5" y="43.0" width="1.2" height="15" fill="#c4c4c4"/>
<rect x="726.1" y="43.0" width="1.2" height="15" fill="#c4c4c4"/>
<rect x="749.2" y="43.0" width="1.2" height="15" fill="#c4c4c4"/>
<rect x="790.9" y="43.0" width="1.2" height="15" fill="#c4c4c4"/>
<rect x="884.9" y="43.0" width="1.2" height="15" fill="#c4c4c4"/>
<rect x="907.4" y="43.0" width="1.2" height="15" fill="#c4c4c4"/>
<rect x="967.1" y="43.0" width="1.2" height="15" fill="#c4c4c4"/>
<g transform="translate(14.2,50.5)"><path d="M-5 -6 L-5 3 L-3 1 L-1 5 L0.5 4 L-1 0.5 L2 0.5 Z" fill="#222"/><rect x="0" y="1" width="6" height="6" fill="#4a9ae0"/></g>
<g transform="translate(35.0,50.5)"><rect x="-6.5" y="-6.5" width="13" height="13" fill="#8cc080" stroke="#555" stroke-width="0.9"/><rect x="-6" y="0" width="6" height="6" fill="#fff" stroke="#555" stroke-width="0.6"/><path d="M1 -1 L5 -5" stroke="#333" stroke-width="1"/></g>
<g transform="translate(52.7,50.5)"><rect x="-6.5" y="-6.5" width="13" height="13" fill="#8cc080" stroke="#555" stroke-width="0.9"/><rect x="-6" y="0" width="6" height="6" fill="#fff" stroke="#555" stroke-width="0.6"/><path d="M1 -1 L5 -5" stroke="#333" stroke-width="1"/></g>
<g transform="translate(75.0,50.5)"><path d="M-6 -4 L6 -4 M-6 0 L6 0 M-6 4 L6 4" stroke="#8cc878" stroke-width="2.2" stroke-linecap="round"/></g>
<g transform="translate(93.0,50.5)"><path d="M-6 -4 L6 -4 M-6 0 L6 0 M-6 4 L6 4" stroke="#8cc878" stroke-width="2.2" stroke-linecap="round"/></g>
<g transform="translate(110.8,50.5)"><path d="M-6 -4 L6 -4 M-6 0 L6 0 M-6 4 L6 4" stroke="#8cc878" stroke-width="2.2" stroke-linecap="round"/></g>
<g transform="translate(133.0,50.5)"><rect x="-6.5" y="-1.5" width="13" height="3" fill="#a8d898"/></g>
<g transform="translate(150.8,50.5)"><rect x="-6.5" y="-1.5" width="13" height="3" fill="#a8d898"/></g>
<g transform="translate(169.5,50.5)"><rect x="-6.5" y="-1.5" width="13" height="3" fill="#a8d898"/></g>
<g transform="translate(190.8,50.5)"><rect x="-6" y="-6" width="12" height="12" fill="#fff" stroke="#777" stroke-width="0.9"/><path d="M-6 -6 L6 6 M0 -6 L0 6 M-6 0 L6 0" stroke="#3a80c0" stroke-width="0.9"/></g>
<g transform="translate(209.5,50.5)"><rect x="-6" y="-6" width="12" height="12" fill="#fff" stroke="#777" stroke-width="0.9"/><path d="M-6 -6 L6 6 M0 -6 L0 6 M-6 0 L6 0" stroke="#3a80c0" stroke-width="0.9"/></g>
<g transform="translate(227.2,50.5)"><rect x="-6" y="-6" width="12" height="12" fill="#fff" stroke="#777" stroke-width="0.9"/><path d="M-6 -6 L6 6 M0 -6 L0 6 M-6 0 L6 0" stroke="#c04040" stroke-width="0.9"/></g>
<g transform="translate(249.4,50.5)"><rect x="-6" y="-6" width="12" height="12" fill="#fff" stroke="#777" stroke-width="0.9"/><rect x="0" y="-6" width="6" height="12" fill="#58a8e8"/><path d="M-6 -2 L6 -2 M-6 2 L6 2 M-2 -6 L-2 6" stroke="#777" stroke-width="0.8"/></g>
<g transform="translate(267.2,50.5)"><rect x="-6" y="-6" width="12" height="12" fill="#fff" stroke="#777" stroke-width="0.9"/><rect x="0" y="-6" width="6" height="12" fill="#58a8e8"/><path d="M-6 -2 L6 -2 M-6 2 L6 2 M-2 -6 L-2 6" stroke="#777" stroke-width="0.8"/></g>
<g transform="translate(288.9,50.5)"><rect x="-6" y="-6" width="12" height="12" fill="#fff" stroke="#777" stroke-width="0.9"/><rect x="0" y="-6" width="6" height="12" fill="#58a8e8"/><path d="M-6 -2 L6 -2 M-6 2 L6 2 M-2 -6 L-2 6" stroke="#777" stroke-width="0.8"/></g>
<g transform="translate(312.0,50.5)"><path d="M-6 -3 L2 -6 L6 4 L-3 7 Z" fill="#666" opacity="0.7" stroke="#555" stroke-width="0.7"/><rect x="1" y="1" width="6" height="6" fill="#3a8ae0"/></g>
<g transform="translate(329.7,50.5)"><path d="M-6 -3 L2 -6 L6 4 L-3 7 Z" fill="#8a7050" opacity="0.7" stroke="#555" stroke-width="0.7"/><rect x="1" y="1" width="6" height="6" fill="#3a8ae0"/></g>
<g transform="translate(348.4,50.5)"><path d="M-6 -3 L2 -6 L6 4 L-3 7 Z" fill="#777" opacity="0.7" stroke="#555" stroke-width="0.7"/><rect x="1" y="1" width="6" height="6" fill="#3a8ae0"/></g>
<g transform="translate(369.7,50.5)"><rect x="-6" y="-6" width="12" height="12" fill="#fff" stroke="#888" stroke-width="0.7"/><rect x="-6" y="-6" width="6" height="6" fill="#fff"/><rect x="0" y="-6" width="6" height="6" fill="#222"/><rect x="-6" y="0" width="6" height="6" fill="#222"/></g>
<g transform="translate(387.5,50.5)"><path d="M-5 -5 L5 -5 L5 5 L-5 5 Z" fill="none" stroke="#999" stroke-width="1.2"/><path d="M-5 0 L5 0 M0 -5 L0 5" stroke="#999" stroke-width="0.8"/></g>
<g transform="translate(406.0,50.5)"><path d="M-5 -5 L5 -5 L5 5 L-5 5 Z" fill="none" stroke="#bbb" stroke-width="1.2"/><path d="M-5 0 L5 0 M0 -5 L0 5" stroke="#bbb" stroke-width="0.8"/></g>
<g transform="translate(423.9,50.5)"><circle cx="0" cy="-1" r="5.5" fill="none" stroke="#3a80c0" stroke-width="1.6"/><path d="M-6 -3 Q0 2 6 -3 M-6 2 Q0 -3 6 2" stroke="#3a80c0" stroke-width="1.6" fill="none"/><circle cx="3" cy="4" r="2.8" fill="#cde" stroke="#3a80c0" stroke-width="0.8"/></g>
<g transform="translate(446.0,50.5)"><rect x="-6" y="-6" width="12" height="12" fill="#fff" stroke="#666" stroke-width="1"/><path d="M0 -6 L0 6 M-6 0 L6 0" stroke="#777" stroke-width="1"/></g>
<g transform="translate(464.2,50.5)"><rect x="-6" y="-6" width="12" height="12" fill="#fff" stroke="#666" stroke-width="1"/><path d="M0 -6 L0 6 M-6 0 L6 0" stroke="#777" stroke-width="1"/></g>
<g transform="translate(486.4,50.5)"><path d="M-6 -4 L6 -4 M-6 -1 L6 -1" stroke="#666" stroke-width="0.8"/><path d="M0 0 L0 5 L4 5" fill="none" stroke="#3a80d0" stroke-width="1.5"/></g>
<g transform="translate(505.0,50.5)"><path d="M-6 -4 L6 -4 M-6 -1 L6 -1" stroke="#666" stroke-width="0.8"/><path d="M1 2 L6 7 M6 2 L1 7" stroke="#d02020" stroke-width="1.3"/></g>
<g transform="translate(522.0,50.5)"><rect x="-6" y="-6" width="12" height="12" fill="#fff" stroke="#666" stroke-width="1"/><path d="M0 -6 L0 6 M-6 0 L6 0" stroke="#3a80c0" stroke-width="1"/></g>
<g transform="translate(545.0,50.5)"><path d="M-6 6 L4 -5" stroke="#b02828" stroke-width="3" stroke-linecap="round"/><path d="M-6 6 L-4 3" stroke="#e8d090" stroke-width="2"/></g>
<g transform="translate(566.3,50.5)"><rect x="-7" y="-7" width="14" height="14" fill="#f0a0a0" stroke="#d06060" stroke-width="0.8"/><rect x="-7" y="0" width="7" height="7" fill="#fff" stroke="#888" stroke-width="0.5"/></g>
<g transform="translate(591.2,50.5)"><circle cx="0" cy="0" r="6.3" fill="#fff" stroke="#222" stroke-width="1.5"/><path d="M-5 -1 L1 1 L5 -3 M1 1 L1 6" stroke="#222" stroke-width="0.8" fill="none"/></g>
<g transform="translate(613.4,50.5)"><circle cx="-1" cy="-1" r="5.5" fill="#40a848" stroke="#225" stroke-width="0.8"/><rect x="2" y="2" width="5" height="5" fill="#fff" stroke="#222" stroke-width="0.8"/></g>
<g transform="translate(631.5,50.5)"><path d="M-6 -2 L-2 -6 L4 -5 L6 1 L2 6 L-4 5 Z" fill="#e03828" stroke="#822" stroke-width="0.8"/><rect x="2" y="2" width="5" height="5" fill="#fff" stroke="#222" stroke-width="0.8"/></g>
<g transform="translate(653.7,50.5)"><path d="M-5 -5 L5 -5 L5 5 L-5 5 Z" fill="none" stroke="#777" stroke-width="1.2"/><path d="M-5 0 L5 0 M0 -5 L0 5" stroke="#777" stroke-width="0.8"/></g>
<g transform="translate(671.5,50.5)"><path d="M-7 3 L0 -1 L7 3 L0 7 Z" fill="#6a6a60" stroke="#333" stroke-width="0.8"/><path d="M0 3 L0 -5" stroke="#d02020" stroke-width="2"/><path d="M-3 -3 L0 -7 L3 -3 Z" fill="#d02020"/></g>
<rect x="684.8" y="42" width="17.8" height="17" fill="#cce4f7" stroke="#a0ccee" stroke-width="0.6"/><g transform="translate(693.7,50.5)"><circle cx="0" cy="0" r="6" fill="#f4f4f4" stroke="#ccc" stroke-width="0.6"/></g>
<g transform="translate(715.0,50.5)"><path d="M-2 -7 L2 -7 L3 -2 L2 7 L-2 7 L-3 -2 Z" fill="#eee" stroke="#555" stroke-width="0.9"/></g>
<g transform="translate(739.0,50.5)"><path d="M-5 -2 Q-5 -7 0 -7 Q5 -7 5 -2 Q5 1 1 2 L1 4 L-3 4 L-3 0 Q1 -1 1 -3" fill="#1a4a9a"/><rect x="2" y="2" width="6" height="6" fill="#d02030" stroke="#fff" stroke-width="0.8"/></g>
<g transform="translate(762.0,50.5)"><rect x="-7" y="-7" width="8" height="8" fill="#888"/><circle cx="0" cy="0" r="4" fill="#fff" stroke="#222" stroke-width="1"/><rect x="1" y="1" width="6" height="6" fill="#555"/></g>
<g transform="translate(780.7,50.5)"><rect x="-7" y="-7" width="8" height="8" fill="#888"/><circle cx="0" cy="0" r="4" fill="#fff" stroke="#222" stroke-width="1"/><rect x="1" y="1" width="6" height="6" fill="#666"/></g>
<g transform="translate(803.0,50.5)"><path d="M-5 -5 L5 -5 L5 5 L-5 5 Z" fill="none" stroke="#999" stroke-width="1.2"/><path d="M-5 0 L5 0 M0 -5 L0 5" stroke="#999" stroke-width="0.8"/></g>
<g transform="translate(820.8,50.5)"><path d="M-6 -3 L0 -6 L6 -3 L6 4 L0 7 L-6 4 Z M-6 -3 L0 0 L6 -3 M0 0 L0 7" fill="#fafafa" stroke="#999" stroke-width="1"/></g>
<g transform="translate(838.6,50.5)"><path d="M-6 -3 L0 -6 L6 -3 L6 4 L0 7 L-6 4 Z M-6 -3 L0 0 L6 -3 M0 0 L0 7" fill="#fafafa" stroke="#999" stroke-width="1"/></g>
<g transform="translate(857.0,50.5)"><circle cx="0" cy="0" r="6.3" fill="#fafafa" stroke="#999" stroke-width="1"/><path d="M-6 0 L6 0 M0 -6 L0 6" stroke="#aaa" stroke-width="0.7"/></g>
<g transform="translate(874.7,50.5)"><circle cx="0" cy="0" r="6.3" fill="#fafafa" stroke="#999" stroke-width="1"/><path d="M-6 0 L6 0 M0 -6 L0 6" stroke="#aaa" stroke-width="0.7"/></g>
<g transform="translate(897.2,50.5)"><path d="M-6 -3 L-1 -6 L4 -3 L4 2 L-1 5 L-6 2 Z" fill="#fff" stroke="#555" stroke-width="0.9"/><path d="M0 2 L0 -1 L2 -1 L2 1 L5 1 L6 7 L1 7 Z" fill="#fff" stroke="#222" stroke-width="1.1"/></g>
<g transform="translate(921.4,50.5)"><path d="M-5 -4 L2 -7 L6 -3 L4 5 L-2 7 L-6 2 Z" fill="#fff" stroke="#444" stroke-width="1.1"/><path d="M-1 -5 L-2 6" stroke="#444" stroke-width="0.8"/></g>
<g transform="translate(939.2,50.5)"><path d="M-4 2 Q-4 -6 0 -6 Q4 -6 4 3" fill="none" stroke="#e06060" stroke-width="1"/><rect x="-7" y="1" width="6" height="5" fill="#208040"/><ellipse cx="4" cy="5" rx="3" ry="2.3" fill="#e8b830"/></g>
<g transform="translate(957.6,50.5)"><path d="M-6 1 L-2 -6 L4 -5 L7 2 L2 7 L-4 6 Z M-2 -6 L0 1 L7 2 M0 1 L-4 6 M0 1 L2 7" fill="none" stroke="#30a040" stroke-width="1.1"/></g>
<g transform="translate(981.3,50.5)"><rect x="-4" y="-4" width="8" height="8" fill="#fff" stroke="#d03030" stroke-width="2"/><path d="M-7 -7 L-5 -5 M7 -7 L5 -5 M-7 7 L-5 5 M7 7 L5 5 M0 -8 L0 -6 M0 8 L0 6 M-8 0 L-6 0 M8 0 L6 0" stroke="#d03030" stroke-width="1.6"/></g>
<g transform="translate(999.6,50.5)"><rect x="-6.5" y="-6" width="13" height="12" fill="#fff" stroke="#333" stroke-width="1.2"/><path d="M-2 -3 L4 -3 M-2 0 L4 0 M-2 3 L4 3" stroke="#777" stroke-width="0.8"/><circle cx="-4" cy="-3" r="0.8" fill="#c03030"/><circle cx="-4" cy="0" r="0.8" fill="#c03030"/><circle cx="-4" cy="3" r="0.8" fill="#c03030"/></g>
<g transform="translate(1012.7,50.5)"><rect x="-3" y="-3" width="8" height="9" fill="#50b050"/></g>
<rect x="25.6" y="61" width="43.4" height="12.5" fill="#ebebeb"/>
<text x="28.6" y="70.3" font-size="7.8" textLength="37.4" lengthAdjust="spacingAndGlyphs" fill="#1a1a1a">(Aksonometria)</text>
<rect x="69.0" y="61" width="34.0" height="12.5" fill="#f8f8f8"/>
<text x="72.0" y="69.3" font-size="7.8" textLength="28.0" lengthAdjust="spacingAndGlyphs" fill="#1a1a1a">(Bez suftu)</text>
<rect x="103.0" y="61" width="32.0" height="12.5" fill="#ebebeb"/>
<text x="106.0" y="70.3" font-size="7.8" textLength="26.0" lengthAdjust="spacingAndGlyphs" fill="#1a1a1a">(Z suftem)</text>
<rect x="135.2" y="61" width="66.8" height="12.5" fill="#ebebeb"/>
<text x="138.2" y="70.3" font-size="7.8" textLength="60.8" lengthAdjust="spacingAndGlyphs" fill="#1a1a1a">Widok-na-sypialnie-duza</text>
<rect x="202.8" y="61" width="66.2" height="12.5" fill="#ebebeb"/>
<text x="205.8" y="70.3" font-size="7.8" textLength="60.2" lengthAdjust="spacingAndGlyphs" fill="#1a1a1a">Widok-na-sypialnie-mala</text>
<rect x="269.4" y="61" width="50.6" height="12.5" fill="#ebebeb"/>
<text x="272.4" y="70.3" font-size="7.8" textLength="44.6" lengthAdjust="spacingAndGlyphs" fill="#1a1a1a">Widok-na-jadalnie</text>
<rect x="321.0" y="61" width="51.7" height="12.5" fill="#ebebeb"/>
<text x="324.0" y="70.3" font-size="7.8" textLength="45.7" lengthAdjust="spacingAndGlyphs" fill="#1a1a1a">Widok-na-kuchnie</text>
<rect x="373.0" y="61" width="51.6" height="12.5" fill="#ebebeb"/>
<text x="376.0" y="70.3" font-size="7.8" textLength="45.6" lengthAdjust="spacingAndGlyphs" fill="#1a1a1a">Widok-na-korytarz</text>
<rect x="424.7" y="61" width="44.7" height="12.5" fill="#ebebeb"/>
<text x="427.7" y="70.3" font-size="7.8" textLength="38.7" lengthAdjust="spacingAndGlyphs" fill="#1a1a1a">Widok-na-salon</text>
<rect x="470.3" y="61" width="43.0" height="12.5" fill="#ebebeb"/>
<text x="473.3" y="70.3" font-size="7.8" textLength="37.0" lengthAdjust="spacingAndGlyphs" fill="#1a1a1a">(Depth-of-field)</text>
<rect x="513.0" y="61" width="75.0" height="12.5" fill="#ebebeb"/>
<text x="516.0" y="70.3" font-size="7.8" textLength="69.0" lengthAdjust="spacingAndGlyphs" fill="#1a1a1a">(Przekroj-aksonometryczny)</text>
<rect x="587.7" y="61" width="59.1" height="12.5" fill="#ebebeb"/>
<text x="590.7" y="70.3" font-size="7.8" textLength="53.1" lengthAdjust="spacingAndGlyphs" fill="#1a1a1a">(Przekroj-na-kuchnie)</text>
<rect x="647.0" y="61" width="83.3" height="12.5" fill="#ebebeb"/>
<text x="650.0" y="70.3" font-size="7.8" textLength="77.3" lengthAdjust="spacingAndGlyphs" fill="#1a1a1a">(Bez-jakichkolwiek-przekrojow)</text>
<g transform="translate(11.8,67)"><circle cx="1" cy="-1.3" r="2.6" fill="none" stroke="#222" stroke-width="1.2"/><path d="M-0.8 0.8 L-3 3" stroke="#222" stroke-width="1.5"/></g>
<rect x="0" y="74" width="863" height="19" fill="#808080"/>
<rect x="0" y="93" width="863" height="486" fill="#ffffff"/>
<clipPath id="vp"><rect x="0" y="93" width="863" height="486"/></clipPath>
<g clip-path="url(#vp)">
<line x1="513" y1="93" x2="513" y2="112" stroke="#7070c8" stroke-width="1"/>
<line x1="512.5" y1="472" x2="512.5" y2="579" stroke="#7070a0" stroke-width="0.8" stroke-dasharray="1.5 2"/>
<line x1="690" y1="321" x2="863" y2="449" stroke="#40b040" stroke-width="0.8"/>
<line x1="190.6" y1="426.4" x2="0" y2="567" stroke="#c07878" stroke-width="0.8"/>
<line x1="390" y1="93" x2="456" y2="139" stroke="#70b070" stroke-width="0.6" stroke-dasharray="2 2"/>
<line x1="564.6" y1="147.6" x2="640" y2="93" stroke="#c89090" stroke-width="0.6" stroke-dasharray="2 2"/>
<polyline points="552,139 552,125.5 609,168 609,182" fill="none" stroke="#444" stroke-width="0.6"/>
<polyline points="614.5,186.4 614.5,172.6 683.2,221 683.2,236.3" fill="none" stroke="#444" stroke-width="0.6"/>
<polygon points="513.0,126.0 360.0,219.0 234.0,360.0 236.0,384.0 357.0,470.0 377.0,488.0 527.0,326.0 671.0,242.0" fill="#f2f2f2" />
<polygon points="513.0,126.0 400.0,196.5 361.0,218.5 225.0,369.5 235.4,380.0 236.0,384.0 316.0,330.0 393.0,277.0 513.0,204.0" fill="#a7a7a7" stroke="#555" stroke-width="0.6" stroke-linejoin="round" />
<polygon points="371.0,218.0 400.0,196.5 400.0,244.0 371.0,262.0" fill="#b2b2b2" stroke="#666" stroke-width="0.4" stroke-linejoin="round" />
<polygon points="513.0,126.0 671.0,242.0 671.0,322.0 513.0,206.0" fill="#b0b0b0" stroke="#555" stroke-width="0.6" stroke-linejoin="round" />
<polygon points="541.0,151.7 576.4,175.6 575.3,198.4 542.2,182.5" fill="#161616" stroke="#222" stroke-width="0.6" stroke-linejoin="round" />
<line x1="562" y1="162" x2="562" y2="222" stroke="#555" stroke-width="1.4"/>
<polygon points="544.5,184.8 575.3,203.0 575.3,221.3 544.5,205.3" fill="#b0b0b0" stroke="#333" stroke-width="0.5" stroke-linejoin="round" />
<line x1="546.0" y1="186.9" x2="546.0" y2="205.78" stroke="#333" stroke-width="0.9"/>
<line x1="550.3" y1="189.47999999999996" x2="550.3" y2="208.01599999999996" stroke="#333" stroke-width="0.9"/>
<line x1="554.6" y1="192.06" x2="554.6" y2="210.252" stroke="#333" stroke-width="0.9"/>
<line x1="558.9" y1="194.64" x2="558.9" y2="212.488" stroke="#333" stroke-width="0.9"/>
<line x1="563.2" y1="197.22000000000003" x2="563.2" y2="214.72400000000002" stroke="#333" stroke-width="0.9"/>
<line x1="567.5" y1="199.8" x2="567.5" y2="216.96" stroke="#333" stroke-width="0.9"/>
<line x1="571.8" y1="202.37999999999997" x2="571.8" y2="219.19599999999997" stroke="#333" stroke-width="0.9"/>
<polygon points="544.5,205.3 575.3,221.3 575.3,232.7 544.5,216.7" fill="#a2a2a2" />
<clipPath id="nz1"><polygon points="544.5,205.3 575.3,221.3 575.3,232.7 544.5,216.7"/></clipPath><g clip-path="url(#nz1)"><circle cx="568.9" cy="227.8" r="0.59" fill="#777"/><circle cx="545.6" cy="209.3" r="0.65" fill="#777"/><circle cx="554.3" cy="205.9" r="0.59" fill="#d0d0d0"/><circle cx="567.0" cy="216.6" r="0.62" fill="#d0d0d0"/><circle cx="550.4" cy="220.5" r="0.78" fill="#777"/><circle cx="564.9" cy="222.0" r="0.35" fill="#777"/><circle cx="554.8" cy="207.9" r="0.78" fill="#777"/><circle cx="558.2" cy="207.9" r="0.42" fill="#777"/><circle cx="547.5" cy="206.6" r="0.84" fill="#777"/><circle cx="559.5" cy="228.1" r="0.42" fill="#d0d0d0"/><circle cx="564.0" cy="212.0" r="0.56" fill="#777"/><circle cx="562.6" cy="207.8" r="0.83" fill="#d0d0d0"/><circle cx="548.1" cy="223.5" r="0.49" fill="#d0d0d0"/><circle cx="556.2" cy="211.4" r="0.66" fill="#d0d0d0"/><circle cx="550.3" cy="209.9" r="0.69" fill="#777"/><circle cx="556.0" cy="219.8" r="0.47" fill="#777"/><circle cx="546.2" cy="216.9" r="0.75" fill="#777"/><circle cx="547.5" cy="217.4" r="0.78" fill="#d0d0d0"/><circle cx="572.0" cy="223.7" r="0.83" fill="#777"/><circle cx="568.6" cy="215.7" r="0.35" fill="#777"/><circle cx="559.0" cy="224.6" r="0.55" fill="#d0d0d0"/><circle cx="550.4" cy="223.9" r="0.57" fill="#d0d0d0"/><circle cx="545.1" cy="220.0" r="0.45" fill="#777"/><circle cx="550.3" cy="219.1" r="0.50" fill="#777"/><circle cx="574.7" cy="230.7" r="0.55" fill="#777"/><circle cx="552.8" cy="218.3" r="0.59" fill="#d0d0d0"/><circle cx="566.7" cy="218.9" r="0.68" fill="#777"/><circle cx="554.5" cy="223.4" r="0.88" fill="#777"/><circle cx="565.9" cy="212.6" r="0.69" fill="#777"/><circle cx="567.0" cy="209.6" r="0.80" fill="#d0d0d0"/><circle cx="563.7" cy="231.7" r="0.41" fill="#d0d0d0"/><circle cx="565.5" cy="215.5" r="0.89" fill="#777"/><circle cx="570.8" cy="207.0" r="0.42" fill="#777"/><circle cx="563.4" cy="216.9" r="0.77" fill="#777"/><circle cx="546.8" cy="211.7" r="0.52" fill="#d0d0d0"/><circle cx="565.5" cy="212.0" r="0.49" fill="#d0d0d0"/><circle cx="563.8" cy="208.0" r="0.36" fill="#777"/><circle cx="558.8" cy="229.9" r="0.68" fill="#d0d0d0"/><circle cx="563.5" cy="230.6" r="0.40" fill="#777"/><circle cx="572.5" cy="229.8" r="0.57" fill="#d0d0d0"/><circle cx="568.9" cy="209.1" r="0.87" fill="#777"/><circle cx="559.3" cy="217.3" r="0.64" fill="#777"/><circle cx="566.4" cy="207.0" r="0.78" fill="#777"/><circle cx="553.3" cy="231.0" r="0.35" fill="#777"/><circle cx="553.1" cy="231.8" r="0.56" fill="#777"/><circle cx="545.5" cy="207.6" r="0.79" fill="#d0d0d0"/><circle cx="561.0" cy="206.2" r="0.40" fill="#777"/><circle cx="545.5" cy="231.4" r="0.74" fill="#d0d0d0"/><circle cx="566.1" cy="214.7" r="0.35" fill="#d0d0d0"/><circle cx="556.8" cy="209.0" r="0.75" fill="#d0d0d0"/></g>
<line x1="544.5" y1="217" x2="575.3" y2="233" stroke="#444" stroke-width="0.7"/>
<polygon points="604.0,199.0 653.0,229.0 653.0,247.0 604.0,217.0" fill="#161616" stroke="#222" stroke-width="0.6" stroke-linejoin="round" />
<line x1="631" y1="213" x2="631" y2="268" stroke="#222" stroke-width="1.6"/>
<polygon points="604.0,226.0 650.0,253.0 650.0,271.0 604.0,244.0" fill="#b0b0b0" stroke="#333" stroke-width="0.5" stroke-linejoin="round" />
<line x1="606.0" y1="228.16" x2="606.0" y2="246.16" stroke="#333" stroke-width="0.9"/>
<line x1="610.4" y1="230.712" x2="610.4" y2="248.712" stroke="#333" stroke-width="0.9"/>
<line x1="614.8" y1="233.26399999999998" x2="614.8" y2="251.26399999999998" stroke="#333" stroke-width="0.9"/>
<line x1="619.2" y1="235.81600000000003" x2="619.2" y2="253.81600000000003" stroke="#333" stroke-width="0.9"/>
<line x1="623.6" y1="238.36800000000002" x2="623.6" y2="256.368" stroke="#333" stroke-width="0.9"/>
<line x1="628.0" y1="240.92" x2="628.0" y2="258.92" stroke="#333" stroke-width="0.9"/>
<line x1="632.4" y1="243.47199999999998" x2="632.4" y2="261.472" stroke="#333" stroke-width="0.9"/>
<line x1="636.8" y1="246.02399999999997" x2="636.8" y2="264.024" stroke="#333" stroke-width="0.9"/>
<line x1="641.2" y1="248.57600000000002" x2="641.2" y2="266.576" stroke="#333" stroke-width="0.9"/>
<line x1="645.6" y1="251.12800000000001" x2="645.6" y2="269.128" stroke="#333" stroke-width="0.9"/>
<polygon points="604.0,244.0 650.0,271.0 650.0,283.0 604.0,256.0" fill="#a2a2a2" />
<clipPath id="nz2"><polygon points="604.0,244.0 650.0,271.0 650.0,283.0 604.0,256.0"/></clipPath><g clip-path="url(#nz2)"><circle cx="618.9" cy="249.9" r="0.69" fill="#d0d0d0"/><circle cx="641.8" cy="247.7" r="0.65" fill="#d0d0d0"/><circle cx="605.7" cy="260.9" r="0.34" fill="#d0d0d0"/><circle cx="629.3" cy="246.3" r="0.64" fill="#d0d0d0"/><circle cx="633.0" cy="266.7" r="0.34" fill="#777"/><circle cx="606.3" cy="252.6" r="0.63" fill="#d0d0d0"/><circle cx="617.3" cy="249.6" r="0.37" fill="#777"/><circle cx="629.8" cy="270.6" r="0.36" fill="#d0d0d0"/><circle cx="621.1" cy="265.4" r="0.34" fill="#d0d0d0"/><circle cx="632.5" cy="263.4" r="0.62" fill="#777"/><circle cx="625.4" cy="280.0" r="0.52" fill="#d0d0d0"/><circle cx="640.5" cy="271.3" r="0.45" fill="#777"/><circle cx="628.2" cy="278.1" r="0.74" fill="#777"/><circle cx="632.0" cy="246.9" r="0.61" fill="#d0d0d0"/><circle cx="638.8" cy="249.9" r="0.59" fill="#d0d0d0"/><circle cx="648.3" cy="247.0" r="0.63" fill="#777"/><circle cx="619.6" cy="257.7" r="0.60" fill="#777"/><circle cx="607.2" cy="247.7" r="0.46" fill="#d0d0d0"/><circle cx="606.8" cy="271.4" r="0.69" fill="#777"/><circle cx="617.1" cy="259.0" r="0.70" fill="#d0d0d0"/><circle cx="647.3" cy="257.9" r="0.67" fill="#777"/><circle cx="606.7" cy="274.0" r="0.38" fill="#d0d0d0"/><circle cx="622.3" cy="279.8" r="0.60" fill="#d0d0d0"/><circle cx="624.7" cy="265.4" r="0.83" fill="#777"/><circle cx="643.7" cy="254.9" r="0.55" fill="#777"/><circle cx="635.4" cy="258.8" r="0.44" fill="#d0d0d0"/><circle cx="612.1" cy="253.0" r="0.44" fill="#777"/><circle cx="642.2" cy="251.1" r="0.47" fill="#d0d0d0"/><circle cx="623.3" cy="258.4" r="0.64" fill="#d0d0d0"/><circle cx="635.8" cy="264.1" r="0.67" fill="#d0d0d0"/><circle cx="625.0" cy="278.0" r="0.87" fill="#777"/><circle cx="622.3" cy="259.4" r="0.59" fill="#777"/><circle cx="606.9" cy="246.6" r="0.43" fill="#d0d0d0"/><circle cx="609.1" cy="267.4" r="0.36" fill="#d0d0d0"/><circle cx="628.7" cy="281.0" r="0.67" fill="#d0d0d0"/><circle cx="644.2" cy="267.9" r="0.39" fill="#777"/><circle cx="648.0" cy="267.5" r="0.58" fill="#d0d0d0"/><circle cx="643.1" cy="282.7" r="0.58" fill="#777"/><circle cx="618.3" cy="249.6" r="0.75" fill="#777"/><circle cx="626.0" cy="271.0" r="0.61" fill="#d0d0d0"/><circle cx="647.7" cy="264.6" r="0.39" fill="#d0d0d0"/><circle cx="638.9" cy="255.6" r="0.69" fill="#d0d0d0"/><circle cx="636.0" cy="254.2" r="0.52" fill="#d0d0d0"/><circle cx="620.4" cy="252.7" r="0.62" fill="#777"/><circle cx="633.3" cy="267.9" r="0.77" fill="#d0d0d0"/><circle cx="641.1" cy="275.9" r="0.74" fill="#d0d0d0"/><circle cx="613.2" cy="263.2" r="0.74" fill="#d0d0d0"/><circle cx="640.3" cy="262.4" r="0.42" fill="#777"/><circle cx="624.6" cy="280.5" r="0.89" fill="#777"/><circle cx="607.7" cy="248.0" r="0.58" fill="#777"/><circle cx="613.4" cy="268.3" r="0.84" fill="#d0d0d0"/><circle cx="626.1" cy="269.5" r="0.78" fill="#d0d0d0"/><circle cx="642.4" cy="248.7" r="0.53" fill="#d0d0d0"/><circle cx="626.0" cy="251.0" r="0.77" fill="#777"/><circle cx="608.0" cy="280.9" r="0.73" fill="#777"/><circle cx="622.5" cy="280.9" r="0.73" fill="#d0d0d0"/><circle cx="649.7" cy="245.1" r="0.65" fill="#777"/><circle cx="641.1" cy="249.7" r="0.80" fill="#777"/><circle cx="634.2" cy="257.7" r="0.63" fill="#d0d0d0"/><circle cx="605.0" cy="275.2" r="0.74" fill="#d0d0d0"/></g>
<polygon points="458.0,263.0 513.0,206.0 671.0,322.0 527.0,326.0 534.0,330.0 440.0,395.0 458.0,334.0" fill="#f5f5f5" />
<clipPath id="kf"><polygon points="458,263 543,226 671,322 527,326 534,330 440,395 458,334"/></clipPath><g clip-path="url(#kf)">
<line x1="400" y1="272" x2="560" y2="162" stroke="#c0c0c0" stroke-width="0.5"/>
<line x1="420" y1="286" x2="580" y2="176" stroke="#c0c0c0" stroke-width="0.5"/>
<line x1="440" y1="300" x2="600" y2="190" stroke="#c0c0c0" stroke-width="0.5"/>
<line x1="460" y1="314" x2="620" y2="204" stroke="#c0c0c0" stroke-width="0.5"/>
<line x1="480" y1="328" x2="640" y2="218" stroke="#c0c0c0" stroke-width="0.5"/>
<line x1="500" y1="342" x2="660" y2="232" stroke="#c0c0c0" stroke-width="0.5"/>
<line x1="520" y1="356" x2="680" y2="246" stroke="#c0c0c0" stroke-width="0.5"/>
<line x1="540" y1="370" x2="700" y2="260" stroke="#c0c0c0" stroke-width="0.5"/>
<line x1="560" y1="384" x2="720" y2="274" stroke="#c0c0c0" stroke-width="0.5"/>
<line x1="358" y1="288" x2="548" y2="418" stroke="#c0c0c0" stroke-width="0.5"/>
<line x1="382" y1="272" x2="572" y2="402" stroke="#c0c0c0" stroke-width="0.5"/>
<line x1="406" y1="256" x2="596" y2="386" stroke="#c0c0c0" stroke-width="0.5"/>
<line x1="430" y1="240" x2="620" y2="370" stroke="#c0c0c0" stroke-width="0.5"/>
<line x1="454" y1="224" x2="644" y2="354" stroke="#c0c0c0" stroke-width="0.5"/>
<line x1="478" y1="208" x2="668" y2="338" stroke="#c0c0c0" stroke-width="0.5"/>
<line x1="502" y1="192" x2="692" y2="322" stroke="#c0c0c0" stroke-width="0.5"/>
<line x1="526" y1="176" x2="716" y2="306" stroke="#c0c0c0" stroke-width="0.5"/>
<line x1="550" y1="160" x2="740" y2="290" stroke="#c0c0c0" stroke-width="0.5"/>
<line x1="574" y1="144" x2="764" y2="274" stroke="#c0c0c0" stroke-width="0.5"/>
<line x1="598" y1="128" x2="788" y2="258" stroke="#c0c0c0" stroke-width="0.5"/>
</g>
<polygon points="527.0,141.0 543.0,152.0 543.0,224.0 527.0,228.0" fill="#ebebeb" stroke="#888" stroke-width="0.6" stroke-linejoin="round" />
<line x1="531" y1="146" x2="531" y2="224" stroke="#c4c4c4" stroke-width="0.6"/>
<line x1="535" y1="146" x2="535" y2="224" stroke="#c4c4c4" stroke-width="0.6"/>
<line x1="539" y1="146" x2="539" y2="224" stroke="#c4c4c4" stroke-width="0.6"/>
<polygon points="574.0,177.0 603.0,192.0 601.0,260.0 574.0,256.0" fill="#ebebeb" stroke="#888" stroke-width="0.6" stroke-linejoin="round" />
<line x1="580" y1="182" x2="580" y2="258" stroke="#c4c4c4" stroke-width="0.6"/>
<line x1="586" y1="182" x2="586" y2="258" stroke="#c4c4c4" stroke-width="0.6"/>
<line x1="592" y1="182" x2="592" y2="258" stroke="#c4c4c4" stroke-width="0.6"/>
<line x1="598" y1="182" x2="598" y2="258" stroke="#c4c4c4" stroke-width="0.6"/>
<polygon points="651.0,229.0 664.0,238.0 664.0,252.0 651.0,250.0" fill="#e0e0e0" stroke="#888" stroke-width="0.6" stroke-linejoin="round" />
<polygon points="417.0,211.0 514.2,141.5 527.3,150.5 527.3,216.0 457.0,263.0 440.0,251.0 436.0,232.0" fill="#9c6c3e" stroke="#4a3018" stroke-width="0.6" stroke-linejoin="round" />
<polygon points="417.0,211.0 514.2,141.5 527.3,150.5 436.0,222.0" fill="#aa7a48" stroke="#4a3018" stroke-width="0.5" stroke-linejoin="round" />
<line x1="432" y1="226.16" x2="432" y2="234.2" stroke="#8a5a30" stroke-width="0.4"/>
<line x1="440" y1="219.84" x2="440" y2="229.8" stroke="#8a5a30" stroke-width="0.4"/>
<line x1="448" y1="213.52" x2="448" y2="225.4" stroke="#8a5a30" stroke-width="0.4"/>
<line x1="456" y1="207.2" x2="456" y2="221.0" stroke="#8a5a30" stroke-width="0.4"/>
<line x1="464" y1="200.88" x2="464" y2="216.6" stroke="#8a5a30" stroke-width="0.4"/>
<line x1="472" y1="194.56" x2="472" y2="212.2" stroke="#8a5a30" stroke-width="0.4"/>
<line x1="480" y1="188.24" x2="480" y2="207.8" stroke="#8a5a30" stroke-width="0.4"/>
<line x1="488" y1="181.92000000000002" x2="488" y2="203.4" stroke="#8a5a30" stroke-width="0.4"/>
<line x1="496" y1="175.6" x2="496" y2="199.0" stroke="#8a5a30" stroke-width="0.4"/>
<line x1="504" y1="169.28" x2="504" y2="194.6" stroke="#8a5a30" stroke-width="0.4"/>
<line x1="512" y1="162.95999999999998" x2="512" y2="190.2" stroke="#8a5a30" stroke-width="0.4"/>
<line x1="520" y1="156.64" x2="520" y2="185.8" stroke="#8a5a30" stroke-width="0.4"/>
<polygon points="514.0,182.0 522.0,176.0 522.0,217.0 514.0,221.0" fill="#d8c090" stroke="#777" stroke-width="0.6" stroke-linejoin="round" />
<polygon points="444.0,228.0 508.0,192.0 513.0,204.0 457.0,240.0" fill="#b4b4b4" stroke="#555" stroke-width="0.6" stroke-linejoin="round" />
<clipPath id="nz3"><polygon points="444.0,228.0 508.0,192.0 513.0,204.0 457.0,240.0"/></clipPath><g clip-path="url(#nz3)"><circle cx="487.0" cy="227.6" r="0.78" fill="#cfcfcf"/><circle cx="502.0" cy="229.2" r="0.45" fill="#cfcfcf"/><circle cx="506.2" cy="197.4" r="0.58" fill="#cfcfcf"/><circle cx="470.3" cy="196.9" r="0.45" fill="#cfcfcf"/><circle cx="472.2" cy="200.7" r="0.82" fill="#999"/><circle cx="455.0" cy="230.3" r="0.38" fill="#999"/><circle cx="452.7" cy="192.1" r="0.82" fill="#cfcfcf"/><circle cx="497.4" cy="238.1" r="0.40" fill="#cfcfcf"/><circle cx="464.0" cy="238.2" r="0.62" fill="#cfcfcf"/><circle cx="456.5" cy="238.5" r="0.42" fill="#999"/><circle cx="464.6" cy="209.3" r="0.40" fill="#cfcfcf"/><circle cx="462.2" cy="207.9" r="0.79" fill="#cfcfcf"/><circle cx="485.1" cy="226.0" r="0.34" fill="#999"/><circle cx="500.5" cy="215.1" r="0.49" fill="#999"/><circle cx="476.6" cy="200.5" r="0.45" fill="#cfcfcf"/><circle cx="509.5" cy="209.2" r="0.54" fill="#999"/><circle cx="469.3" cy="219.8" r="0.31" fill="#cfcfcf"/><circle cx="492.8" cy="221.9" r="0.87" fill="#cfcfcf"/><circle cx="496.1" cy="236.6" r="0.87" fill="#999"/><circle cx="479.4" cy="234.9" r="0.45" fill="#999"/><circle cx="451.5" cy="227.9" r="0.78" fill="#999"/><circle cx="446.5" cy="237.4" r="0.35" fill="#999"/><circle cx="479.4" cy="209.4" r="0.39" fill="#999"/><circle cx="507.8" cy="218.2" r="0.49" fill="#999"/><circle cx="465.1" cy="230.3" r="0.68" fill="#999"/><circle cx="512.8" cy="199.8" r="0.33" fill="#999"/><circle cx="446.2" cy="227.5" r="0.51" fill="#999"/><circle cx="475.4" cy="212.2" r="0.33" fill="#cfcfcf"/><circle cx="499.3" cy="208.0" r="0.42" fill="#cfcfcf"/><circle cx="487.5" cy="229.8" r="0.36" fill="#999"/><circle cx="469.7" cy="194.8" r="0.55" fill="#cfcfcf"/><circle cx="475.3" cy="240.0" r="0.81" fill="#999"/><circle cx="510.2" cy="225.1" r="0.49" fill="#999"/><circle cx="464.1" cy="211.4" r="0.39" fill="#999"/><circle cx="500.7" cy="217.5" r="0.41" fill="#999"/><circle cx="503.9" cy="200.6" r="0.60" fill="#999"/><circle cx="448.4" cy="230.2" r="0.51" fill="#cfcfcf"/><circle cx="496.4" cy="209.4" r="0.72" fill="#999"/><circle cx="501.6" cy="204.7" r="0.89" fill="#999"/><circle cx="510.0" cy="208.3" r="0.41" fill="#cfcfcf"/><circle cx="476.7" cy="229.1" r="0.50" fill="#999"/><circle cx="475.9" cy="231.2" r="0.69" fill="#999"/><circle cx="468.0" cy="222.9" r="0.74" fill="#999"/><circle cx="468.2" cy="232.5" r="0.82" fill="#999"/><circle cx="511.4" cy="237.9" r="0.61" fill="#cfcfcf"/><circle cx="457.7" cy="209.4" r="0.81" fill="#999"/><circle cx="491.7" cy="226.5" r="0.74" fill="#cfcfcf"/><circle cx="486.6" cy="236.9" r="0.61" fill="#999"/><circle cx="464.9" cy="218.6" r="0.82" fill="#999"/><circle cx="493.7" cy="193.3" r="0.40" fill="#999"/><circle cx="487.1" cy="200.7" r="0.76" fill="#cfcfcf"/><circle cx="487.5" cy="194.0" r="0.58" fill="#cfcfcf"/><circle cx="455.4" cy="234.8" r="0.37" fill="#cfcfcf"/><circle cx="477.3" cy="218.3" r="0.55" fill="#999"/><circle cx="470.2" cy="221.4" r="0.65" fill="#cfcfcf"/><circle cx="493.5" cy="210.0" r="0.51" fill="#999"/><circle cx="503.1" cy="233.6" r="0.71" fill="#999"/><circle cx="510.5" cy="218.4" r="0.48" fill="#999"/><circle cx="481.6" cy="208.3" r="0.65" fill="#999"/><circle cx="500.5" cy="212.1" r="0.79" fill="#999"/></g>
<polygon points="470.0,214.0 485.0,205.0 496.0,213.0 481.0,222.0" fill="#fafafa" stroke="#555" stroke-width="0.6" stroke-linejoin="round" />
<polygon points="452.0,229.0 462.0,223.0 468.0,233.0 458.0,238.0" fill="#2a2a2a" />
<circle cx="436" cy="210" r="0.8" fill="#111"/>
<circle cx="466" cy="190" r="0.8" fill="#111"/>
<circle cx="486" cy="176" r="0.8" fill="#111"/>
<circle cx="506" cy="163" r="0.8" fill="#111"/>
<circle cx="520" cy="200" r="0.8" fill="#111"/>
<circle cx="520" cy="210" r="0.8" fill="#111"/>
<circle cx="495" cy="230" r="0.8" fill="#111"/>
<circle cx="495" cy="240" r="0.8" fill="#111"/>
<circle cx="485" cy="250" r="0.8" fill="#111"/>
<circle cx="470" cy="250" r="0.8" fill="#111"/>
<line x1="416.5" y1="200" x2="423.5" y2="209.5" stroke="#111" stroke-width="0.9"/>
<ellipse cx="416.5" cy="200" rx="1.8" ry="1.4" fill="#111"/>
<ellipse cx="424.5" cy="210" rx="3.2" ry="1.5" fill="none" stroke="#5a3a20" stroke-width="0.6"/>
<line x1="455.6" y1="171.6" x2="462.6" y2="181.1" stroke="#111" stroke-width="0.9"/>
<ellipse cx="455.6" cy="171.6" rx="1.8" ry="1.4" fill="#111"/>
<ellipse cx="463.6" cy="181.6" rx="3.2" ry="1.5" fill="none" stroke="#5a3a20" stroke-width="0.6"/>
<line x1="493.9" y1="142.3" x2="500.9" y2="151.8" stroke="#111" stroke-width="0.9"/>
<ellipse cx="493.9" cy="142.3" rx="1.8" ry="1.4" fill="#111"/>
<ellipse cx="501.9" cy="152.3" rx="3.2" ry="1.5" fill="none" stroke="#5a3a20" stroke-width="0.6"/>
<polygon points="394.0,198.0 456.0,242.0 456.0,300.0 394.0,258.0" fill="#acacac" stroke="#555" stroke-width="0.6" stroke-linejoin="round" />
<polygon points="355.8,267.2 370.5,257.5 391.7,239.5 417.7,255.8 391.7,295.0" fill="#e2e2e2" />
<line x1="355.8" y1="267.2" x2="391.7" y2="295" stroke="#777" stroke-width="0.5"/>
<line x1="371" y1="218" x2="371" y2="262" stroke="#555" stroke-width="0.6"/>
<line x1="381" y1="213" x2="381" y2="270" stroke="#777" stroke-width="0.5"/>
<path d="M378 240 L374 247 L382 247 Z" fill="none" stroke="#333" stroke-width="0.7"/>
<circle cx="393" cy="258" r="4" fill="none" stroke="#333" stroke-width="0.7"/>
<polygon points="433.0,258.0 392.0,300.0 392.0,360.0 457.6,334.0 457.6,268.0" fill="#a8a8a8" stroke="#555" stroke-width="0.6" stroke-linejoin="round" />
<polygon points="420.0,306.0 432.0,298.0 432.0,322.0 420.0,330.0" fill="#2a2a2a" />
<polygon points="422.0,309.0 430.0,303.0 430.0,320.0 422.0,326.0" fill="#888" />
<path d="M489 259 L488 265 M495 258 L495 264" stroke="#bbb" stroke-width="0.7"/><ellipse cx="490" cy="257" rx="6" ry="4" fill="#8e8e8e" stroke="#444" stroke-width="0.5"/><path d="M484 256 Q485 250 491 251 Q496 252 496 256" fill="#9a9a9a" stroke="#444" stroke-width="0.5"/>
<path d="M473.5 271 L472.5 277 M479.5 270 L479.5 276" stroke="#bbb" stroke-width="0.7"/><ellipse cx="474.5" cy="269" rx="6" ry="4" fill="#8e8e8e" stroke="#444" stroke-width="0.5"/><path d="M468.5 268 Q469.5 262 475.5 263 Q480.5 264 480.5 268" fill="#9a9a9a" stroke="#444" stroke-width="0.5"/>
<path d="M508.7 245 L507.7 251 M514.7 244 L514.7 250" stroke="#bbb" stroke-width="0.7"/><ellipse cx="509.7" cy="243" rx="6" ry="4" fill="#8e8e8e" stroke="#444" stroke-width="0.5"/><path d="M503.7 242 Q504.7 236 510.7 237 Q515.7 238 515.7 242" fill="#9a9a9a" stroke="#444" stroke-width="0.5"/>
<polygon points="474.5,279.7 528.0,245.8 544.8,257.6 492.8,295.3" fill="#a57547" stroke="#5a3a20" stroke-width="0.5" stroke-linejoin="round" />
<polygon points="492.8,295.3 544.8,257.6 544.8,260.0 492.8,298.0" fill="#6a4828" />
<path d="M538.6 271 L537.6 277 M544.6 270 L544.6 276" stroke="#bbb" stroke-width="0.7"/><ellipse cx="539.6" cy="269" rx="6" ry="4" fill="#8e8e8e" stroke="#444" stroke-width="0.5"/><path d="M533.6 268 Q534.6 262 540.6 263 Q545.6 264 545.6 268" fill="#9a9a9a" stroke="#444" stroke-width="0.5"/>
<path d="M524.3 288 L523.3 294 M530.3 287 L530.3 293" stroke="#bbb" stroke-width="0.7"/><ellipse cx="525.3" cy="286" rx="6" ry="4" fill="#8e8e8e" stroke="#444" stroke-width="0.5"/><path d="M519.3 285 Q520.3 279 526.3 280 Q531.3 281 531.3 285" fill="#9a9a9a" stroke="#444" stroke-width="0.5"/>
<path d="M508.7 301 L507.7 307 M514.7 300 L514.7 306" stroke="#bbb" stroke-width="0.7"/><ellipse cx="509.7" cy="299" rx="6" ry="4" fill="#8e8e8e" stroke="#444" stroke-width="0.5"/><path d="M503.7 298 Q504.7 292 510.7 293 Q515.7 294 515.7 298" fill="#9a9a9a" stroke="#444" stroke-width="0.5"/>
<ellipse cx="508" cy="245" rx="9" ry="6" fill="none" stroke="#c8a050" stroke-width="0.8"/>
<ellipse cx="508" cy="246" rx="5" ry="3.5" fill="#555" opacity="0.8"/>
<path d="M500 258 Q510 250 520 262 M505 264 Q515 255 525 264 M510 255 L518 268" fill="none" stroke="#3a2a20" stroke-width="0.7"/>
<ellipse cx="509" cy="267" rx="4" ry="2.5" fill="#c04a20"/>
<ellipse cx="583" cy="283" rx="19" ry="12" fill="#7c7c7c" stroke="#333" stroke-width="0.6"/>
<polygon points="582.0,277.0 592.0,276.0 592.0,285.0 583.0,286.0" fill="#d8641e" />
<polygon points="572.0,275.0 581.0,272.0 583.0,283.0 575.0,285.0" fill="#c4c4c4" />
<polygon points="521.7,315.0 563.4,288.2 568.6,295.4 529.5,320.8" fill="#333" stroke="#222" stroke-width="0.5" stroke-linejoin="round" />
<rect x="525.0" y="313.9" width="2.2" height="1.8" fill="#9a9a9a"/>
<rect x="526.5" y="316.9" width="2.2" height="1.8" fill="#9a9a9a"/>
<rect x="529.8" y="310.8" width="2.2" height="1.8" fill="#9a9a9a"/>
<rect x="531.3" y="313.8" width="2.2" height="1.8" fill="#9a9a9a"/>
<rect x="534.6" y="307.7" width="2.2" height="1.8" fill="#9a9a9a"/>
<rect x="536.1" y="310.7" width="2.2" height="1.8" fill="#9a9a9a"/>
<rect x="539.4" y="304.7" width="2.2" height="1.8" fill="#9a9a9a"/>
<rect x="540.9" y="307.7" width="2.2" height="1.8" fill="#9a9a9a"/>
<rect x="544.2" y="301.6" width="2.2" height="1.8" fill="#9a9a9a"/>
<rect x="545.7" y="304.6" width="2.2" height="1.8" fill="#9a9a9a"/>
<rect x="549.0" y="298.5" width="2.2" height="1.8" fill="#9a9a9a"/>
<rect x="550.5" y="301.5" width="2.2" height="1.8" fill="#9a9a9a"/>
<rect x="553.8" y="295.5" width="2.2" height="1.8" fill="#9a9a9a"/>
<rect x="555.3" y="298.5" width="2.2" height="1.8" fill="#9a9a9a"/>
<rect x="558.6" y="292.4" width="2.2" height="1.8" fill="#9a9a9a"/>
<rect x="560.1" y="295.4" width="2.2" height="1.8" fill="#9a9a9a"/>
<rect x="563.4" y="289.3" width="2.2" height="1.8" fill="#9a9a9a"/>
<rect x="564.9" y="292.3" width="2.2" height="1.8" fill="#9a9a9a"/>
<polygon points="498.2,333.8 511.3,326.0 523.0,337.8 513.9,346.9" fill="#333" stroke="#222" stroke-width="0.5" stroke-linejoin="round" />
<rect x="503" y="333" width="2.2" height="1.8" fill="#9a9a9a"/>
<rect x="508" y="330" width="2.2" height="1.8" fill="#9a9a9a"/>
<rect x="507" y="337" width="2.2" height="1.8" fill="#9a9a9a"/>
<rect x="512" y="334" width="2.2" height="1.8" fill="#9a9a9a"/>
<rect x="511" y="341" width="2.2" height="1.8" fill="#9a9a9a"/>
<rect x="516" y="338" width="2.2" height="1.8" fill="#9a9a9a"/>
<line x1="529.5" y1="324.7" x2="600" y2="284.3" stroke="#555" stroke-width="0.5" stroke-dasharray="2 1.5"/>
<clipPath id="hf"><polygon points="457.6,268 534,321 498,346 458,334"/></clipPath><g clip-path="url(#hf)">
<line x1="392" y1="327" x2="512" y2="242" stroke="#555" stroke-width="0.5"/>
<line x1="408" y1="338" x2="528" y2="253" stroke="#555" stroke-width="0.5"/>
<line x1="424" y1="349" x2="544" y2="264" stroke="#555" stroke-width="0.5"/>
<line x1="440" y1="360" x2="560" y2="275" stroke="#555" stroke-width="0.5"/>
<line x1="456" y1="371" x2="576" y2="286" stroke="#555" stroke-width="0.5"/>
<line x1="472" y1="382" x2="592" y2="297" stroke="#555" stroke-width="0.5"/>
<line x1="488" y1="393" x2="608" y2="308" stroke="#555" stroke-width="0.5"/>
<line x1="504" y1="404" x2="624" y2="319" stroke="#555" stroke-width="0.5"/>
<line x1="366" y1="276" x2="506" y2="376" stroke="#555" stroke-width="0.5"/>
<line x1="384" y1="264" x2="524" y2="364" stroke="#555" stroke-width="0.5"/>
<line x1="402" y1="252" x2="542" y2="352" stroke="#555" stroke-width="0.5"/>
<line x1="420" y1="240" x2="560" y2="340" stroke="#555" stroke-width="0.5"/>
<line x1="438" y1="228" x2="578" y2="328" stroke="#555" stroke-width="0.5"/>
<line x1="456" y1="216" x2="596" y2="316" stroke="#555" stroke-width="0.5"/>
<line x1="474" y1="204" x2="614" y2="304" stroke="#555" stroke-width="0.5"/>
<line x1="492" y1="192" x2="632" y2="292" stroke="#555" stroke-width="0.5"/>
<line x1="510" y1="180" x2="650" y2="280" stroke="#555" stroke-width="0.5"/>
</g>
<polygon points="372.0,216.0 534.0,327.0 534.0,336.0 374.0,225.0" fill="#8a5c32" stroke="#3a2510" stroke-width="0.5" stroke-linejoin="round" />
<polygon points="372.0,209.0 375.0,208.0 536.0,319.0 534.0,327.0 372.0,216.0" fill="#a8783f" stroke="#3a2510" stroke-width="0.5" stroke-linejoin="round" />
<line x1="372" y1="216" x2="534" y2="327" stroke="#2a1a08" stroke-width="0.8"/>
<polygon points="236.6,384.0 315.8,329.3 315.8,350.8 245.4,392.0" fill="#a06c3c" stroke="#555" stroke-width="0.6" stroke-linejoin="round" />
<line x1="245" y1="380.204" x2="245" y2="390.236" stroke="#c89a68" stroke-width="0.7"/>
<line x1="253" y1="374.68399999999997" x2="253" y2="385.516" stroke="#c89a68" stroke-width="0.7"/>
<line x1="261" y1="369.164" x2="261" y2="380.796" stroke="#c89a68" stroke-width="0.7"/>
<line x1="269" y1="363.644" x2="269" y2="376.076" stroke="#c89a68" stroke-width="0.7"/>
<line x1="277" y1="358.124" x2="277" y2="371.356" stroke="#c89a68" stroke-width="0.7"/>
<line x1="285" y1="352.604" x2="285" y2="366.636" stroke="#c89a68" stroke-width="0.7"/>
<line x1="293" y1="347.084" x2="293" y2="361.916" stroke="#c89a68" stroke-width="0.7"/>
<line x1="301" y1="341.564" x2="301" y2="357.196" stroke="#c89a68" stroke-width="0.7"/>
<line x1="309" y1="336.044" x2="309" y2="352.476" stroke="#c89a68" stroke-width="0.7"/>
<polygon points="245.0,392.0 315.8,350.0 333.0,362.0 298.0,386.0 275.0,418.0" fill="#6c6c60" />
<clipPath id="pk4"><polygon points="245.0,392.0 315.8,350.0 333.0,362.0 298.0,386.0 275.0,418.0"/></clipPath><g clip-path="url(#pk4)"><line x1="185" y1="270.0" x2="393" y2="145.2" stroke="#7c7c70" stroke-width="0.5"/><line x1="185" y1="273.0" x2="393" y2="148.2" stroke="#7c7c70" stroke-width="0.5"/><line x1="185" y1="276.0" x2="393" y2="151.2" stroke="#7c7c70" stroke-width="0.5"/><line x1="185" y1="279.0" x2="393" y2="154.2" stroke="#7c7c70" stroke-width="0.5"/><line x1="185" y1="282.0" x2="393" y2="157.2" stroke="#7c7c70" stroke-width="0.5"/><line x1="185" y1="285.0" x2="393" y2="160.2" stroke="#7c7c70" stroke-width="0.5"/><line x1="185" y1="288.0" x2="393" y2="163.2" stroke="#7c7c70" stroke-width="0.5"/><line x1="185" y1="291.0" x2="393" y2="166.2" stroke="#7c7c70" stroke-width="0.5"/><line x1="185" y1="294.0" x2="393" y2="169.2" stroke="#7c7c70" stroke-width="0.5"/><line x1="185" y1="297.0" x2="393" y2="172.2" stroke="#7c7c70" stroke-width="0.5"/><line x1="185" y1="300.0" x2="393" y2="175.2" stroke="#7c7c70" stroke-width="0.5"/><line x1="185" y1="303.0" x2="393" y2="178.2" stroke="#7c7c70" stroke-width="0.5"/><line x1="185" y1="306.0" x2="393" y2="181.2" stroke="#7c7c70" stroke-width="0.5"/><line x1="185" y1="309.0" x2="393" y2="184.2" stroke="#7c7c70" stroke-width="0.5"/><line x1="185" y1="312.0" x2="393" y2="187.2" stroke="#7c7c70" stroke-width="0.5"/><line x1="185" y1="315.0" x2="393" y2="190.2" stroke="#7c7c70" stroke-width="0.5"/><line x1="185" y1="318.0" x2="393" y2="193.2" stroke="#7c7c70" stroke-width="0.5"/><line x1="185" y1="321.0" x2="393" y2="196.2" stroke="#7c7c70" stroke-width="0.5"/><line x1="185" y1="324.0" x2="393" y2="199.2" stroke="#7c7c70" stroke-width="0.5"/><line x1="185" y1="327.0" x2="393" y2="202.2" stroke="#7c7c70" stroke-width="0.5"/><line x1="185" y1="330.0" x2="393" y2="205.2" stroke="#7c7c70" stroke-width="0.5"/><line x1="185" y1="333.0" x2="393" y2="208.2" stroke="#7c7c70" stroke-width="0.5"/><line x1="185" y1="336.0" x2="393" y2="211.2" stroke="#7c7c70" stroke-width="0.5"/><line x1="185" y1="339.0" x2="393" y2="214.2" stroke="#7c7c70" stroke-width="0.5"/><line x1="185" y1="342.0" x2="393" y2="217.2" stroke="#7c7c70" stroke-width="0.5"/><line x1="185" y1="345.0" x2="393" y2="220.2" stroke="#7c7c70" stroke-width="0.5"/><line x1="185" y1="348.0" x2="393" y2="223.2" stroke="#7c7c70" stroke-width="0.5"/><line x1="185" y1="351.0" x2="393" y2="226.2" stroke="#7c7c70" stroke-width="0.5"/><line x1="185" y1="354.0" x2="393" y2="229.2" stroke="#7c7c70" stroke-width="0.5"/><line x1="185" y1="357.0" x2="393" y2="232.2" stroke="#7c7c70" stroke-width="0.5"/><line x1="185" y1="360.0" x2="393" y2="235.2" stroke="#7c7c70" stroke-width="0.5"/><line x1="185" y1="363.0" x2="393" y2="238.2" stroke="#7c7c70" stroke-width="0.5"/><line x1="185" y1="366.0" x2="393" y2="241.2" stroke="#7c7c70" stroke-width="0.5"/><line x1="185" y1="369.0" x2="393" y2="244.2" stroke="#7c7c70" stroke-width="0.5"/><line x1="185" y1="372.0" x2="393" y2="247.2" stroke="#7c7c70" stroke-width="0.5"/><line x1="185" y1="375.0" x2="393" y2="250.2" stroke="#7c7c70" stroke-width="0.5"/><line x1="185" y1="378.0" x2="393" y2="253.2" stroke="#7c7c70" stroke-width="0.5"/><line x1="185" y1="381.0" x2="393" y2="256.2" stroke="#7c7c70" stroke-width="0.5"/><line x1="185" y1="384.0" x2="393" y2="259.2" stroke="#7c7c70" stroke-width="0.5"/><line x1="185" y1="387.0" x2="393" y2="262.2" stroke="#7c7c70" stroke-width="0.5"/><line x1="185" y1="390.0" x2="393" y2="265.2" stroke="#7c7c70" stroke-width="0.5"/><line x1="185" y1="393.0" x2="393" y2="268.2" stroke="#7c7c70" stroke-width="0.5"/><line x1="185" y1="396.0" x2="393" y2="271.2" stroke="#7c7c70" stroke-width="0.5"/><line x1="185" y1="399.0" x2="393" y2="274.2" stroke="#7c7c70" stroke-width="0.5"/><line x1="185" y1="402.0" x2="393" y2="277.2" stroke="#7c7c70" stroke-width="0.5"/><line x1="185" y1="405.0" x2="393" y2="280.2" stroke="#7c7c70" stroke-width="0.5"/><line x1="185" y1="408.0" x2="393" y2="283.2" stroke="#7c7c70" stroke-width="0.5"/><line x1="185" y1="411.0" x2="393" y2="286.2" stroke="#7c7c70" stroke-width="0.5"/><line x1="185" y1="414.0" x2="393" y2="289.2" stroke="#7c7c70" stroke-width="0.5"/><line x1="185" y1="417.0" x2="393" y2="292.2" stroke="#7c7c70" stroke-width="0.5"/><line x1="185" y1="420.0" x2="393" y2="295.2" stroke="#7c7c70" stroke-width="0.5"/><line x1="185" y1="423.0" x2="393" y2="298.2" stroke="#7c7c70" stroke-width="0.5"/><line x1="185" y1="426.0" x2="393" y2="301.2" stroke="#7c7c70" stroke-width="0.5"/><line x1="185" y1="429.0" x2="393" y2="304.2" stroke="#7c7c70" stroke-width="0.5"/><line x1="185" y1="432.0" x2="393" y2="307.2" stroke="#7c7c70" stroke-width="0.5"/><line x1="185" y1="435.0" x2="393" y2="310.2" stroke="#7c7c70" stroke-width="0.5"/><line x1="185" y1="438.0" x2="393" y2="313.2" stroke="#7c7c70" stroke-width="0.5"/><line x1="185" y1="441.0" x2="393" y2="316.2" stroke="#7c7c70" stroke-width="0.5"/><line x1="185" y1="444.0" x2="393" y2="319.2" stroke="#7c7c70" stroke-width="0.5"/><line x1="185" y1="447.0" x2="393" y2="322.2" stroke="#7c7c70" stroke-width="0.5"/><line x1="185" y1="450.0" x2="393" y2="325.2" stroke="#7c7c70" stroke-width="0.5"/><line x1="185" y1="453.0" x2="393" y2="328.2" stroke="#7c7c70" stroke-width="0.5"/><line x1="185" y1="456.0" x2="393" y2="331.2" stroke="#7c7c70" stroke-width="0.5"/><line x1="185" y1="459.0" x2="393" y2="334.2" stroke="#7c7c70" stroke-width="0.5"/><line x1="185" y1="462.0" x2="393" y2="337.2" stroke="#7c7c70" stroke-width="0.5"/><line x1="185" y1="465.0" x2="393" y2="340.2" stroke="#7c7c70" stroke-width="0.5"/><line x1="185" y1="468.0" x2="393" y2="343.2" stroke="#7c7c70" stroke-width="0.5"/><line x1="185" y1="471.0" x2="393" y2="346.2" stroke="#7c7c70" stroke-width="0.5"/><line x1="185" y1="474.0" x2="393" y2="349.2" stroke="#7c7c70" stroke-width="0.5"/><line x1="185" y1="477.0" x2="393" y2="352.2" stroke="#7c7c70" stroke-width="0.5"/><line x1="185" y1="480.0" x2="393" y2="355.2" stroke="#7c7c70" stroke-width="0.5"/><line x1="185" y1="483.0" x2="393" y2="358.2" stroke="#7c7c70" stroke-width="0.5"/><line x1="185" y1="486.0" x2="393" y2="361.2" stroke="#7c7c70" stroke-width="0.5"/><line x1="185" y1="489.0" x2="393" y2="364.2" stroke="#7c7c70" stroke-width="0.5"/><line x1="185" y1="492.0" x2="393" y2="367.2" stroke="#7c7c70" stroke-width="0.5"/><line x1="185" y1="495.0" x2="393" y2="370.2" stroke="#7c7c70" stroke-width="0.5"/></g>
<polygon points="247.0,390.0 277.0,368.0 304.0,386.0 273.0,417.0" fill="#d4d8dc" stroke="#555" stroke-width="0.6" stroke-linejoin="round" />
<clipPath id="nz5"><polygon points="247.0,390.0 277.0,368.0 304.0,386.0 273.0,417.0"/></clipPath><g clip-path="url(#nz5)"><circle cx="260.6" cy="394.7" r="0.66" fill="#a0a8b0"/><circle cx="274.0" cy="396.5" r="0.82" fill="#eef0f2"/><circle cx="261.8" cy="379.5" r="1.10" fill="#eef0f2"/><circle cx="277.8" cy="394.9" r="0.68" fill="#b8bec4"/><circle cx="260.2" cy="375.4" r="1.05" fill="#eef0f2"/><circle cx="289.3" cy="400.9" r="0.44" fill="#a0a8b0"/><circle cx="249.4" cy="406.2" r="0.98" fill="#eef0f2"/><circle cx="273.9" cy="403.2" r="1.02" fill="#a0a8b0"/><circle cx="291.9" cy="388.9" r="0.91" fill="#a0a8b0"/><circle cx="272.3" cy="413.8" r="1.02" fill="#b8bec4"/><circle cx="249.0" cy="392.2" r="0.58" fill="#a0a8b0"/><circle cx="271.9" cy="398.7" r="0.61" fill="#a0a8b0"/><circle cx="294.5" cy="396.1" r="0.77" fill="#eef0f2"/><circle cx="280.3" cy="412.3" r="0.88" fill="#b8bec4"/><circle cx="295.8" cy="416.6" r="0.87" fill="#b8bec4"/><circle cx="286.8" cy="384.0" r="0.78" fill="#a0a8b0"/><circle cx="279.4" cy="403.0" r="0.55" fill="#a0a8b0"/><circle cx="262.2" cy="374.1" r="0.74" fill="#a0a8b0"/><circle cx="303.4" cy="372.3" r="0.96" fill="#eef0f2"/><circle cx="298.1" cy="369.0" r="0.70" fill="#eef0f2"/><circle cx="296.7" cy="370.2" r="0.83" fill="#b8bec4"/><circle cx="268.5" cy="396.7" r="0.79" fill="#eef0f2"/><circle cx="275.8" cy="416.9" r="0.62" fill="#b8bec4"/><circle cx="253.2" cy="394.2" r="1.06" fill="#eef0f2"/><circle cx="263.6" cy="380.9" r="0.88" fill="#eef0f2"/><circle cx="264.9" cy="415.0" r="1.03" fill="#eef0f2"/><circle cx="268.5" cy="410.6" r="0.67" fill="#a0a8b0"/><circle cx="285.8" cy="373.0" r="1.08" fill="#a0a8b0"/><circle cx="262.5" cy="399.1" r="0.90" fill="#eef0f2"/><circle cx="271.9" cy="380.7" r="0.61" fill="#eef0f2"/><circle cx="247.7" cy="388.3" r="0.81" fill="#b8bec4"/><circle cx="268.5" cy="396.9" r="0.49" fill="#a0a8b0"/><circle cx="282.8" cy="390.8" r="0.88" fill="#eef0f2"/><circle cx="281.7" cy="381.7" r="0.74" fill="#a0a8b0"/><circle cx="250.5" cy="401.1" r="1.07" fill="#eef0f2"/><circle cx="282.8" cy="382.6" r="0.82" fill="#b8bec4"/><circle cx="267.7" cy="383.3" r="0.66" fill="#a0a8b0"/><circle cx="262.1" cy="406.6" r="0.47" fill="#b8bec4"/><circle cx="302.4" cy="401.5" r="0.49" fill="#a0a8b0"/><circle cx="259.7" cy="407.4" r="0.57" fill="#b8bec4"/><circle cx="285.6" cy="399.8" r="0.47" fill="#a0a8b0"/><circle cx="265.4" cy="384.4" r="0.98" fill="#eef0f2"/><circle cx="293.2" cy="415.1" r="0.46" fill="#a0a8b0"/><circle cx="284.1" cy="411.4" r="0.72" fill="#b8bec4"/><circle cx="291.9" cy="369.7" r="1.07" fill="#eef0f2"/><circle cx="293.0" cy="409.1" r="0.53" fill="#eef0f2"/><circle cx="266.4" cy="408.6" r="0.46" fill="#a0a8b0"/><circle cx="266.7" cy="374.4" r="0.60" fill="#eef0f2"/><circle cx="273.5" cy="399.1" r="0.60" fill="#a0a8b0"/><circle cx="270.3" cy="413.1" r="0.51" fill="#b8bec4"/><circle cx="274.2" cy="408.8" r="0.84" fill="#a0a8b0"/><circle cx="271.8" cy="414.6" r="1.05" fill="#b8bec4"/><circle cx="248.8" cy="390.4" r="0.93" fill="#a0a8b0"/><circle cx="276.6" cy="382.2" r="0.64" fill="#b8bec4"/><circle cx="296.1" cy="410.0" r="1.08" fill="#b8bec4"/><circle cx="293.2" cy="370.2" r="1.03" fill="#a0a8b0"/><circle cx="276.2" cy="377.7" r="1.02" fill="#eef0f2"/><circle cx="279.9" cy="368.6" r="0.92" fill="#b8bec4"/><circle cx="275.7" cy="379.7" r="0.41" fill="#a0a8b0"/><circle cx="270.6" cy="414.0" r="0.83" fill="#eef0f2"/><circle cx="254.1" cy="415.6" r="0.78" fill="#b8bec4"/><circle cx="267.1" cy="377.7" r="0.77" fill="#b8bec4"/><circle cx="256.8" cy="406.8" r="1.05" fill="#b8bec4"/><circle cx="293.9" cy="368.4" r="0.84" fill="#eef0f2"/><circle cx="249.8" cy="381.3" r="0.59" fill="#a0a8b0"/><circle cx="276.6" cy="370.5" r="0.63" fill="#b8bec4"/><circle cx="295.9" cy="406.0" r="0.43" fill="#b8bec4"/><circle cx="250.9" cy="415.8" r="1.00" fill="#b8bec4"/><circle cx="276.4" cy="392.0" r="0.51" fill="#b8bec4"/><circle cx="267.0" cy="399.7" r="0.81" fill="#eef0f2"/><circle cx="262.1" cy="416.4" r="0.70" fill="#b8bec4"/><circle cx="278.7" cy="403.1" r="0.67" fill="#b8bec4"/><circle cx="279.3" cy="370.1" r="0.72" fill="#a0a8b0"/><circle cx="291.6" cy="386.6" r="0.96" fill="#a0a8b0"/><circle cx="297.5" cy="370.6" r="0.84" fill="#a0a8b0"/><circle cx="265.0" cy="414.6" r="0.69" fill="#b8bec4"/><circle cx="261.0" cy="394.3" r="0.89" fill="#b8bec4"/><circle cx="292.8" cy="379.0" r="0.49" fill="#b8bec4"/><circle cx="300.4" cy="386.3" r="1.03" fill="#eef0f2"/><circle cx="253.9" cy="401.8" r="1.06" fill="#a0a8b0"/><circle cx="284.8" cy="411.5" r="0.95" fill="#a0a8b0"/><circle cx="253.2" cy="383.6" r="0.77" fill="#a0a8b0"/><circle cx="287.8" cy="391.2" r="0.57" fill="#eef0f2"/><circle cx="249.5" cy="372.5" r="0.47" fill="#eef0f2"/><circle cx="257.2" cy="369.2" r="0.99" fill="#b8bec4"/><circle cx="248.5" cy="373.6" r="0.74" fill="#a0a8b0"/><circle cx="301.3" cy="396.4" r="0.96" fill="#b8bec4"/><circle cx="303.8" cy="395.6" r="0.77" fill="#b8bec4"/><circle cx="253.1" cy="404.7" r="1.05" fill="#b8bec4"/><circle cx="278.4" cy="410.6" r="0.53" fill="#b8bec4"/><circle cx="260.8" cy="376.8" r="0.57" fill="#a0a8b0"/><circle cx="286.9" cy="414.2" r="0.58" fill="#a0a8b0"/><circle cx="269.6" cy="385.2" r="0.69" fill="#b8bec4"/><circle cx="268.4" cy="379.5" r="1.05" fill="#a0a8b0"/><circle cx="302.1" cy="388.3" r="0.80" fill="#a0a8b0"/><circle cx="285.4" cy="393.3" r="0.74" fill="#a0a8b0"/><circle cx="269.9" cy="411.5" r="0.51" fill="#eef0f2"/><circle cx="289.6" cy="412.9" r="0.76" fill="#eef0f2"/><circle cx="280.4" cy="410.0" r="0.50" fill="#b8bec4"/><circle cx="255.4" cy="393.3" r="1.05" fill="#a0a8b0"/><circle cx="277.7" cy="406.2" r="0.87" fill="#eef0f2"/><circle cx="280.9" cy="396.6" r="1.09" fill="#b8bec4"/><circle cx="264.5" cy="381.1" r="0.96" fill="#b8bec4"/><circle cx="256.8" cy="385.7" r="0.63" fill="#b8bec4"/><circle cx="270.8" cy="402.2" r="0.89" fill="#b8bec4"/><circle cx="273.7" cy="408.9" r="0.98" fill="#a0a8b0"/><circle cx="248.6" cy="416.6" r="0.45" fill="#eef0f2"/><circle cx="291.6" cy="411.2" r="0.43" fill="#b8bec4"/><circle cx="297.8" cy="399.8" r="0.94" fill="#b8bec4"/><circle cx="301.6" cy="409.8" r="0.57" fill="#b8bec4"/><circle cx="291.2" cy="374.7" r="0.84" fill="#a0a8b0"/><circle cx="295.9" cy="412.1" r="0.58" fill="#b8bec4"/><circle cx="264.9" cy="388.7" r="0.91" fill="#b8bec4"/><circle cx="253.7" cy="380.9" r="1.04" fill="#b8bec4"/><circle cx="267.3" cy="396.4" r="0.87" fill="#b8bec4"/><circle cx="248.7" cy="384.2" r="0.67" fill="#b8bec4"/><circle cx="259.0" cy="396.7" r="1.07" fill="#eef0f2"/><circle cx="254.1" cy="383.6" r="1.02" fill="#b8bec4"/><circle cx="284.9" cy="373.5" r="1.02" fill="#eef0f2"/><circle cx="252.5" cy="414.1" r="0.66" fill="#eef0f2"/><circle cx="290.2" cy="382.5" r="0.87" fill="#a0a8b0"/><circle cx="300.8" cy="408.1" r="0.48" fill="#eef0f2"/><circle cx="285.4" cy="394.3" r="0.48" fill="#eef0f2"/><circle cx="276.0" cy="370.9" r="0.61" fill="#a0a8b0"/><circle cx="279.3" cy="376.9" r="0.85" fill="#a0a8b0"/><circle cx="255.5" cy="386.2" r="1.04" fill="#eef0f2"/><circle cx="254.0" cy="413.7" r="0.50" fill="#eef0f2"/><circle cx="283.8" cy="399.8" r="0.69" fill="#eef0f2"/><circle cx="283.9" cy="390.4" r="0.62" fill="#b8bec4"/><circle cx="287.2" cy="373.3" r="0.53" fill="#a0a8b0"/><circle cx="278.0" cy="404.2" r="0.65" fill="#eef0f2"/><circle cx="262.4" cy="370.6" r="0.50" fill="#eef0f2"/><circle cx="275.8" cy="380.1" r="0.94" fill="#eef0f2"/><circle cx="296.9" cy="414.3" r="0.71" fill="#b8bec4"/><circle cx="267.1" cy="409.5" r="0.48" fill="#eef0f2"/><circle cx="280.6" cy="401.4" r="0.80" fill="#a0a8b0"/><circle cx="253.4" cy="402.2" r="0.80" fill="#a0a8b0"/><circle cx="289.4" cy="408.0" r="0.92" fill="#a0a8b0"/><circle cx="281.6" cy="410.1" r="0.96" fill="#a0a8b0"/><circle cx="277.1" cy="395.9" r="0.54" fill="#eef0f2"/></g>
<polygon points="250.0,396.0 265.0,386.0 272.0,392.0 256.0,402.0" fill="#f0f0f0" />
<polygon points="296.0,380.0 304.0,375.0 307.0,384.0 300.0,389.0" fill="#f0f0f0" />
<polygon points="330.0,258.0 400.0,306.0 355.0,346.0 310.0,300.0" fill="#a9a9a9" />
<polygon points="315.6,297.0 327.4,292.0 368.4,318.0 352.8,328.0 352.8,370.0 315.6,350.0" fill="#94653a" stroke="#4a3018" stroke-width="0.6" stroke-linejoin="round" />
<polygon points="315.6,297.0 327.4,292.0 368.4,318.0 352.8,328.0" fill="#a87848" stroke="#4a3018" stroke-width="0.6" stroke-linejoin="round" />
<polygon points="326.0,258.0 336.0,260.0 336.0,297.0 326.0,295.0" fill="#c4c4c4" stroke="#444" stroke-width="0.5" stroke-linejoin="round" />
<polygon points="387.0,302.0 349.0,346.0 377.5,366.0 411.5,327.0 440.0,344.0" fill="#a6a6a6" stroke="#555" stroke-width="0.6" stroke-linejoin="round" />
<polygon points="366.0,347.0 377.0,340.0 377.0,356.0 366.0,363.0" fill="#2a2a2a" />
<polygon points="349.0,346.0 377.5,366.0 377.5,430.0 349.0,410.0" fill="#b0b0b0" stroke="#555" stroke-width="0.6" stroke-linejoin="round" />
<polygon points="353.0,373.4 372.5,385.0 372.5,432.0 354.0,421.6" fill="#3a3a3a" />
<polygon points="355.0,377.0 371.0,386.5 371.0,430.0 356.0,419.0" fill="#d6d6d6" />
<polygon points="356.0,405.0 371.0,412.0 371.0,430.0 356.0,419.0" fill="#eeeeee" />
<polygon points="349.0,346.0 285.0,414.0 285.0,450.0 349.0,410.0" fill="#a9a9a9" stroke="#555" stroke-width="0.6" stroke-linejoin="round" />
<polygon points="331.0,389.0 352.0,373.0 352.0,419.0 331.0,432.0" fill="#2a2a2a" />
<polygon points="333.5,392.0 349.5,379.5 349.5,390.0 333.5,402.0" fill="#7e7e7e" />
<polygon points="333.5,405.5 349.5,393.0 349.5,403.5 333.5,415.5" fill="#7e7e7e" />
<polygon points="333.5,419.0 349.5,406.5 349.5,417.0 333.5,429.0" fill="#7e7e7e" />
<polygon points="377.5,366.0 411.5,327.0 484.4,381.0 466.0,414.0 425.0,442.0 377.5,430.0" fill="#aaaaaa" stroke="#555" stroke-width="0.6" stroke-linejoin="round" />
<polygon points="285.0,450.0 349.0,410.0 377.5,430.0 425.0,442.0 466.0,414.0 482.0,400.0 384.7,491.0 360.0,482.0 300.0,470.0" fill="#72726a" />
<clipPath id="pk6"><polygon points="285.0,450.0 349.0,410.0 377.5,430.0 425.0,442.0 466.0,414.0 482.0,400.0 384.7,491.0 360.0,482.0 300.0,470.0"/></clipPath><g clip-path="url(#pk6)"><line x1="225" y1="320.0" x2="542" y2="123.5" stroke="#7e7e74" stroke-width="0.5"/><line x1="225" y1="323.0" x2="542" y2="126.5" stroke="#7e7e74" stroke-width="0.5"/><line x1="225" y1="326.0" x2="542" y2="129.5" stroke="#7e7e74" stroke-width="0.5"/><line x1="225" y1="329.0" x2="542" y2="132.5" stroke="#7e7e74" stroke-width="0.5"/><line x1="225" y1="332.0" x2="542" y2="135.5" stroke="#7e7e74" stroke-width="0.5"/><line x1="225" y1="335.0" x2="542" y2="138.5" stroke="#7e7e74" stroke-width="0.5"/><line x1="225" y1="338.0" x2="542" y2="141.5" stroke="#7e7e74" stroke-width="0.5"/><line x1="225" y1="341.0" x2="542" y2="144.5" stroke="#7e7e74" stroke-width="0.5"/><line x1="225" y1="344.0" x2="542" y2="147.5" stroke="#7e7e74" stroke-width="0.5"/><line x1="225" y1="347.0" x2="542" y2="150.5" stroke="#7e7e74" stroke-width="0.5"/><line x1="225" y1="350.0" x2="542" y2="153.5" stroke="#7e7e74" stroke-width="0.5"/><line x1="225" y1="353.0" x2="542" y2="156.5" stroke="#7e7e74" stroke-width="0.5"/><line x1="225" y1="356.0" x2="542" y2="159.5" stroke="#7e7e74" stroke-width="0.5"/><line x1="225" y1="359.0" x2="542" y2="162.5" stroke="#7e7e74" stroke-width="0.5"/><line x1="225" y1="362.0" x2="542" y2="165.5" stroke="#7e7e74" stroke-width="0.5"/><line x1="225" y1="365.0" x2="542" y2="168.5" stroke="#7e7e74" stroke-width="0.5"/><line x1="225" y1="368.0" x2="542" y2="171.5" stroke="#7e7e74" stroke-width="0.5"/><line x1="225" y1="371.0" x2="542" y2="174.5" stroke="#7e7e74" stroke-width="0.5"/><line x1="225" y1="374.0" x2="542" y2="177.5" stroke="#7e7e74" stroke-width="0.5"/><line x1="225" y1="377.0" x2="542" y2="180.5" stroke="#7e7e74" stroke-width="0.5"/><line x1="225" y1="380.0" x2="542" y2="183.5" stroke="#7e7e74" stroke-width="0.5"/><line x1="225" y1="383.0" x2="542" y2="186.5" stroke="#7e7e74" stroke-width="0.5"/><line x1="225" y1="386.0" x2="542" y2="189.5" stroke="#7e7e74" stroke-width="0.5"/><line x1="225" y1="389.0" x2="542" y2="192.5" stroke="#7e7e74" stroke-width="0.5"/><line x1="225" y1="392.0" x2="542" y2="195.5" stroke="#7e7e74" stroke-width="0.5"/><line x1="225" y1="395.0" x2="542" y2="198.5" stroke="#7e7e74" stroke-width="0.5"/><line x1="225" y1="398.0" x2="542" y2="201.5" stroke="#7e7e74" stroke-width="0.5"/><line x1="225" y1="401.0" x2="542" y2="204.5" stroke="#7e7e74" stroke-width="0.5"/><line x1="225" y1="404.0" x2="542" y2="207.5" stroke="#7e7e74" stroke-width="0.5"/><line x1="225" y1="407.0" x2="542" y2="210.5" stroke="#7e7e74" stroke-width="0.5"/><line x1="225" y1="410.0" x2="542" y2="213.5" stroke="#7e7e74" stroke-width="0.5"/><line x1="225" y1="413.0" x2="542" y2="216.5" stroke="#7e7e74" stroke-width="0.5"/><line x1="225" y1="416.0" x2="542" y2="219.5" stroke="#7e7e74" stroke-width="0.5"/><line x1="225" y1="419.0" x2="542" y2="222.5" stroke="#7e7e74" stroke-width="0.5"/><line x1="225" y1="422.0" x2="542" y2="225.5" stroke="#7e7e74" stroke-width="0.5"/><line x1="225" y1="425.0" x2="542" y2="228.5" stroke="#7e7e74" stroke-width="0.5"/><line x1="225" y1="428.0" x2="542" y2="231.5" stroke="#7e7e74" stroke-width="0.5"/><line x1="225" y1="431.0" x2="542" y2="234.5" stroke="#7e7e74" stroke-width="0.5"/><line x1="225" y1="434.0" x2="542" y2="237.5" stroke="#7e7e74" stroke-width="0.5"/><line x1="225" y1="437.0" x2="542" y2="240.5" stroke="#7e7e74" stroke-width="0.5"/><line x1="225" y1="440.0" x2="542" y2="243.5" stroke="#7e7e74" stroke-width="0.5"/><line x1="225" y1="443.0" x2="542" y2="246.5" stroke="#7e7e74" stroke-width="0.5"/><line x1="225" y1="446.0" x2="542" y2="249.5" stroke="#7e7e74" stroke-width="0.5"/><line x1="225" y1="449.0" x2="542" y2="252.5" stroke="#7e7e74" stroke-width="0.5"/><line x1="225" y1="452.0" x2="542" y2="255.5" stroke="#7e7e74" stroke-width="0.5"/><line x1="225" y1="455.0" x2="542" y2="258.5" stroke="#7e7e74" stroke-width="0.5"/><line x1="225" y1="458.0" x2="542" y2="261.5" stroke="#7e7e74" stroke-width="0.5"/><line x1="225" y1="461.0" x2="542" y2="264.5" stroke="#7e7e74" stroke-width="0.5"/><line x1="225" y1="464.0" x2="542" y2="267.5" stroke="#7e7e74" stroke-width="0.5"/><line x1="225" y1="467.0" x2="542" y2="270.5" stroke="#7e7e74" stroke-width="0.5"/><line x1="225" y1="470.0" x2="542" y2="273.5" stroke="#7e7e74" stroke-width="0.5"/><line x1="225" y1="473.0" x2="542" y2="276.5" stroke="#7e7e74" stroke-width="0.5"/><line x1="225" y1="476.0" x2="542" y2="279.5" stroke="#7e7e74" stroke-width="0.5"/><line x1="225" y1="479.0" x2="542" y2="282.5" stroke="#7e7e74" stroke-width="0.5"/><line x1="225" y1="482.0" x2="542" y2="285.5" stroke="#7e7e74" stroke-width="0.5"/><line x1="225" y1="485.0" x2="542" y2="288.5" stroke="#7e7e74" stroke-width="0.5"/><line x1="225" y1="488.0" x2="542" y2="291.5" stroke="#7e7e74" stroke-width="0.5"/><line x1="225" y1="491.0" x2="542" y2="294.5" stroke="#7e7e74" stroke-width="0.5"/><line x1="225" y1="494.0" x2="542" y2="297.5" stroke="#7e7e74" stroke-width="0.5"/><line x1="225" y1="497.0" x2="542" y2="300.5" stroke="#7e7e74" stroke-width="0.5"/><line x1="225" y1="500.0" x2="542" y2="303.5" stroke="#7e7e74" stroke-width="0.5"/><line x1="225" y1="503.0" x2="542" y2="306.5" stroke="#7e7e74" stroke-width="0.5"/><line x1="225" y1="506.0" x2="542" y2="309.5" stroke="#7e7e74" stroke-width="0.5"/><line x1="225" y1="509.0" x2="542" y2="312.5" stroke="#7e7e74" stroke-width="0.5"/><line x1="225" y1="512.0" x2="542" y2="315.5" stroke="#7e7e74" stroke-width="0.5"/><line x1="225" y1="515.0" x2="542" y2="318.5" stroke="#7e7e74" stroke-width="0.5"/><line x1="225" y1="518.0" x2="542" y2="321.5" stroke="#7e7e74" stroke-width="0.5"/><line x1="225" y1="521.0" x2="542" y2="324.5" stroke="#7e7e74" stroke-width="0.5"/><line x1="225" y1="524.0" x2="542" y2="327.5" stroke="#7e7e74" stroke-width="0.5"/><line x1="225" y1="527.0" x2="542" y2="330.5" stroke="#7e7e74" stroke-width="0.5"/><line x1="225" y1="530.0" x2="542" y2="333.5" stroke="#7e7e74" stroke-width="0.5"/><line x1="225" y1="533.0" x2="542" y2="336.5" stroke="#7e7e74" stroke-width="0.5"/><line x1="225" y1="536.0" x2="542" y2="339.5" stroke="#7e7e74" stroke-width="0.5"/><line x1="225" y1="539.0" x2="542" y2="342.5" stroke="#7e7e74" stroke-width="0.5"/><line x1="225" y1="542.0" x2="542" y2="345.5" stroke="#7e7e74" stroke-width="0.5"/><line x1="225" y1="545.0" x2="542" y2="348.5" stroke="#7e7e74" stroke-width="0.5"/><line x1="225" y1="548.0" x2="542" y2="351.5" stroke="#7e7e74" stroke-width="0.5"/><line x1="225" y1="551.0" x2="542" y2="354.5" stroke="#7e7e74" stroke-width="0.5"/><line x1="225" y1="554.0" x2="542" y2="357.5" stroke="#7e7e74" stroke-width="0.5"/><line x1="225" y1="557.0" x2="542" y2="360.5" stroke="#7e7e74" stroke-width="0.5"/><line x1="225" y1="560.0" x2="542" y2="363.5" stroke="#7e7e74" stroke-width="0.5"/><line x1="225" y1="563.0" x2="542" y2="366.5" stroke="#7e7e74" stroke-width="0.5"/><line x1="225" y1="566.0" x2="542" y2="369.5" stroke="#7e7e74" stroke-width="0.5"/><line x1="225" y1="569.0" x2="542" y2="372.5" stroke="#7e7e74" stroke-width="0.5"/></g>
<polygon points="397.0,374.0 411.4,362.8 466.2,401.6 466.2,414.0 450.2,430.0 425.0,442.7 397.0,429.0" fill="#9a6a3c" stroke="#4a3018" stroke-width="0.6" stroke-linejoin="round" />
<polygon points="397.0,374.0 411.4,362.8 466.2,401.6 450.2,415.3" fill="#a87848" stroke="#4a3018" stroke-width="0.5" stroke-linejoin="round" />
<polygon points="450.2,415.3 466.2,401.6 466.2,414.0 450.2,430.0" fill="#7e5430" />
<line x1="403" y1="383.18" x2="403" y2="432.7" stroke="#845830" stroke-width="0.4"/>
<line x1="411" y1="389.42" x2="411" y2="436.3" stroke="#845830" stroke-width="0.4"/>
<line x1="419" y1="395.66" x2="419" y2="439.9" stroke="#845830" stroke-width="0.4"/>
<line x1="427" y1="401.9" x2="427" y2="443.5" stroke="#845830" stroke-width="0.4"/>
<line x1="435" y1="408.14" x2="435" y2="447.1" stroke="#845830" stroke-width="0.4"/>
<line x1="443" y1="414.38" x2="443" y2="450.7" stroke="#845830" stroke-width="0.4"/>
<ellipse cx="388.5" cy="436" rx="5" ry="6" fill="#f2f2f2" stroke="#777" stroke-width="0.5"/><ellipse cx="388" cy="425.5" rx="6.5" ry="4" fill="#3a3a3a" opacity="0.85"/>
<polygon points="304.8,431.0 320.0,421.0 323.0,432.0 307.0,442.0" fill="#f2f2f2" stroke="#555" stroke-width="0.6" stroke-linejoin="round" />
<line x1="307" y1="429" x2="307" y2="440" stroke="#999" stroke-width="0.5"/>
<line x1="310" y1="427" x2="310" y2="438" stroke="#999" stroke-width="0.5"/>
<line x1="313" y1="425" x2="313" y2="436" stroke="#999" stroke-width="0.5"/>
<line x1="316" y1="423" x2="316" y2="434" stroke="#999" stroke-width="0.5"/>
<line x1="319" y1="421" x2="319" y2="432" stroke="#999" stroke-width="0.5"/>
<polygon points="352.8,470.8 391.2,444.1 413.3,458.4 384.7,491.0" fill="#f6f6f6" stroke="#999" stroke-width="0.5" stroke-linejoin="round" />
<path d="M366.5 459 L379.5 452.6 L388.6 463 L387.3 477.3 L379.5 485 L372 483 L366.5 478 Q371 470 366.5 459 Z" fill="#4a4a4a"/>
<polygon points="348.9,461.7 371.7,445.4 378.8,451.3 353.4,468.2" fill="#b0582a" stroke="#333" stroke-width="0.5" stroke-linejoin="round" />
<polygon points="327.0,260.0 491.0,377.0 491.0,385.0 329.0,268.0" fill="#8a5c32" stroke="#3a2510" stroke-width="0.5" stroke-linejoin="round" />
<polygon points="327.0,254.0 330.0,253.0 493.0,370.0 491.0,377.0 327.0,260.0" fill="#a8783f" stroke="#3a2510" stroke-width="0.5" stroke-linejoin="round" />
<line x1="327" y1="260" x2="491" y2="377" stroke="#2a1a08" stroke-width="0.8"/>
<line x1="387" y1="302" x2="285" y2="414" stroke="#444" stroke-width="3.6"/>
<line x1="387" y1="302" x2="285" y2="414" stroke="#f4f4f4" stroke-width="2.4"/>
<line x1="349" y1="346" x2="377.5" y2="366" stroke="#444" stroke-width="3.6"/>
<line x1="349" y1="346" x2="377.5" y2="366" stroke="#f4f4f4" stroke-width="2.4"/>
<line x1="377.5" y1="366" x2="411.5" y2="327" stroke="#444" stroke-width="3.6"/>
<line x1="377.5" y1="366" x2="411.5" y2="327" stroke="#f4f4f4" stroke-width="2.4"/>
<line x1="411.5" y1="327" x2="484.4" y2="381" stroke="#444" stroke-width="3.6"/>
<line x1="411.5" y1="327" x2="484.4" y2="381" stroke="#f4f4f4" stroke-width="2.4"/>
<line x1="394" y1="198" x2="457" y2="242" stroke="#444" stroke-width="3.4"/>
<line x1="394" y1="198" x2="457" y2="242" stroke="#eee" stroke-width="2.2"/>
<line x1="433" y1="258" x2="392" y2="300" stroke="#444" stroke-width="3.4"/>
<line x1="433" y1="258" x2="392" y2="300" stroke="#f0f0f0" stroke-width="2.2"/>
<polygon points="689.0,320.0 689.0,331.0 368.0,570.0 368.0,557.0" fill="#c9c9c9" stroke="#333" stroke-width="0.6" stroke-linejoin="round" />
<polygon points="689.0,243.6 689.0,320.0 368.0,557.0 367.7,512.0 389.3,494.9 535.5,333.0" fill="#a8a8a8" stroke="#333" stroke-width="0.6" stroke-linejoin="round" />
<line x1="678" y1="280" x2="395" y2="490" stroke="#333" stroke-width="0.8" stroke-dasharray="2.5 2"/>
<line x1="536" y1="338" x2="536" y2="385" stroke="#444" stroke-width="0.6" stroke-dasharray="2.5 2"/>
<line x1="400" y1="470" x2="534" y2="338" stroke="#555" stroke-width="0.5" stroke-dasharray="2.5 2"/>
<polygon points="506.5,397.8 564.7,355.4 564.7,371.3 506.5,416.9" fill="none" stroke="#444" stroke-width="0.5" stroke-linejoin="round" />
<polygon points="510.7,403.0 528.7,389.3 534.0,387.0 537.0,386.0 537.0,434.0 534.0,431.7 510.7,444.4" fill="#2a2a2a" />
<polygon points="512.5,405.0 527.0,394.0 527.0,433.0 512.5,441.0" fill="#7a7a7a" />
<polygon points="510.7,444.4 534.0,431.7 536.0,434.0 512.0,447.0" fill="#e8e8e8" />
<path d="M518 396 Q535 378 560 368 L548 382 Q532 388 522 398 Z" fill="none" stroke="#333" stroke-width="0.7"/>
<polygon points="191.5,426.5 368.0,557.0 368.0,570.0 191.5,437.0" fill="#c9c9c9" stroke="#333" stroke-width="0.6" stroke-linejoin="round" />
<polygon points="191.5,404.0 368.0,533.8 368.0,557.0 191.5,426.5" fill="#b0b0b0" stroke="#333" stroke-width="0.6" stroke-linejoin="round" />
<polygon points="191.5,380.0 368.0,508.8 368.0,533.8 191.5,404.0" fill="#cecece" stroke="#333" stroke-width="0.6" stroke-linejoin="round" />
<polygon points="201.0,390.9 248.0,425.2 248.0,443.2 201.0,408.9" fill="none" stroke="#666" stroke-width="0.5" stroke-linejoin="round" />
<line x1="201" y1="399.93025" x2="248" y2="434.21675" stroke="#888" stroke-width="0.4"/>
<polygon points="254.0,429.6 288.0,454.4 288.0,472.4 254.0,447.6" fill="none" stroke="#666" stroke-width="0.5" stroke-linejoin="round" />
<line x1="254" y1="438.59375" x2="288" y2="463.39675" stroke="#888" stroke-width="0.4"/>
<polygon points="290.0,455.9 338.0,490.9 338.0,508.9 290.0,473.9" fill="none" stroke="#666" stroke-width="0.5" stroke-linejoin="round" />
<line x1="290" y1="464.85575" x2="338" y2="499.87175" stroke="#888" stroke-width="0.4"/>
<polygon points="345.0,496.0 365.0,510.6 365.0,528.6 345.0,514.0" fill="none" stroke="#666" stroke-width="0.5" stroke-linejoin="round" />
<line x1="345" y1="504.97825" x2="365" y2="519.56825" stroke="#888" stroke-width="0.4"/>
<polygon points="513.0,112.0 513.0,126.0 400.0,196.5 361.0,218.5 352.0,210.0" fill="#d3d3d3" stroke="#333" stroke-width="0.6" stroke-linejoin="round" />
<polygon points="513.0,112.0 689.0,243.6 672.0,244.4 513.0,126.0" fill="#d3d3d3" stroke="#333" stroke-width="0.6" stroke-linejoin="round" />
<polygon points="689.0,243.6 535.5,333.0 529.5,321.0 672.0,244.4" fill="#d3d3d3" stroke="#333" stroke-width="0.6" stroke-linejoin="round" />
<polygon points="535.5,333.0 389.3,494.9 384.7,490.0 529.5,321.0" fill="#d3d3d3" stroke="#333" stroke-width="0.6" stroke-linejoin="round" />
<polygon points="352.0,210.0 361.0,218.5 225.0,369.5 214.6,362.4" fill="#d3d3d3" stroke="#333" stroke-width="0.6" stroke-linejoin="round" />
<line x1="361" y1="218.5" x2="225" y2="369.5" stroke="#333" stroke-width="0.8" stroke-dasharray="3 1.5"/>
<polygon points="232.0,383.5 258.0,402.5 258.0,429.5 232.0,410.5" fill="#1c1c1c" stroke="#111" stroke-width="0.5" stroke-linejoin="round" />
<polygon points="233.8,389.9 243.8,397.2 243.8,415.7 233.8,408.4" fill="#c4c4c4" />
<polygon points="233.8,402.9 243.8,410.2 243.8,415.7 233.8,408.4" fill="#8a8a80" />
<polygon points="246.2,398.9 256.2,406.2 256.2,424.7 246.2,417.4" fill="#c4c4c4" />
<polygon points="246.2,411.9 256.2,419.2 256.2,424.7 246.2,417.4" fill="#8a8a80" />
<line x1="232" y1="385.54475" x2="258" y2="404.51175" stroke="#ececec" stroke-width="1.6"/>
<polygon points="284.0,423.5 323.0,451.9 323.0,476.9 284.0,448.5" fill="#1c1c1c" stroke="#111" stroke-width="0.5" stroke-linejoin="round" />
<polygon points="285.8,429.8 302.3,441.8 302.3,458.3 285.8,446.3" fill="#c4c4c4" />
<polygon points="285.8,440.8 302.3,452.8 302.3,458.3 285.8,446.3" fill="#8a8a80" />
<polygon points="304.7,443.6 321.2,455.6 321.2,472.1 304.7,460.1" fill="#c4c4c4" />
<polygon points="304.7,454.6 321.2,466.6 321.2,472.1 304.7,460.1" fill="#8a8a80" />
<line x1="284" y1="425.47875" x2="323" y2="453.92925" stroke="#ececec" stroke-width="1.6"/>
<polygon points="330.8,459.6 366.0,485.3 366.0,508.3 330.8,482.6" fill="#1c1c1c" stroke="#111" stroke-width="0.5" stroke-linejoin="round" />
<polygon points="332.6,465.9 347.2,476.6 347.2,491.1 332.6,480.4" fill="#c4c4c4" />
<polygon points="332.6,474.9 347.2,485.6 347.2,491.1 332.6,480.4" fill="#8a8a80" />
<polygon points="349.6,478.3 364.2,489.0 364.2,503.5 349.6,492.8" fill="#c4c4c4" />
<polygon points="349.6,487.3 364.2,498.0 364.2,503.5 349.6,492.8" fill="#8a8a80" />
<line x1="330.8" y1="461.61935" x2="366" y2="487.29775" stroke="#ececec" stroke-width="1.6"/>
<polygon points="191.5,380.0 201.5,386.5 201.5,433.0 191.5,426.5" fill="#b2b2b2" stroke="#333" stroke-width="0.6" stroke-linejoin="round" />
<polygon points="201.5,386.5 211.3,379.3 211.3,404.0 201.5,411.0" fill="#c4c4c4" stroke="#333" stroke-width="0.6" stroke-linejoin="round" />
<polygon points="211.3,379.3 225.0,388.0 225.0,414.0 211.3,406.0" fill="#d2d2d2" stroke="#333" stroke-width="0.6" stroke-linejoin="round" />
<polygon points="225.0,388.0 235.4,380.0 235.4,406.0 225.0,414.0" fill="#b4b4b4" stroke="#333" stroke-width="0.6" stroke-linejoin="round" />
<polygon points="191.5,380.0 214.6,362.4 235.4,380.0 225.0,388.0 211.3,379.3 201.5,386.5" fill="#d3d3d3" stroke="#333" stroke-width="0.6" stroke-linejoin="round" />
<polygon points="254.0,410.0 273.5,429.4 273.5,450.0 254.0,436.0" fill="#d0d0d0" stroke="#333" stroke-width="0.6" stroke-linejoin="round" />
<polygon points="273.5,429.4 287.9,420.3 287.9,441.0 273.5,450.0" fill="#b8b8b8" stroke="#333" stroke-width="0.6" stroke-linejoin="round" />
<polygon points="254.0,410.0 268.3,402.0 287.9,420.3 273.5,429.4" fill="#d3d3d3" stroke="#333" stroke-width="0.6" stroke-linejoin="round" />
<polygon points="323.0,451.6 330.0,456.0 330.0,481.0 323.0,476.0" fill="#d0d0d0" stroke="#333" stroke-width="0.6" stroke-linejoin="round" />
<polygon points="330.0,456.0 335.0,452.9 335.0,478.0 330.0,481.0" fill="#b8b8b8" stroke="#333" stroke-width="0.6" stroke-linejoin="round" />
<polygon points="323.0,451.6 328.0,448.5 335.0,452.9 330.0,456.0" fill="#d3d3d3" stroke="#333" stroke-width="0.6" stroke-linejoin="round" />
<polygon points="356.5,503.2 367.7,512.0 367.7,536.0 356.5,528.0" fill="#cbcbcb" stroke="#333" stroke-width="0.6" stroke-linejoin="round" />
<polygon points="356.5,503.2 376.0,485.2 389.3,494.9 367.7,512.0" fill="#d3d3d3" stroke="#333" stroke-width="0.6" stroke-linejoin="round" />
<g fill="none" stroke="#333" stroke-width="0.6"><path d="M691.5 276 Q692 266 702 266 Q712 266 712.5 276 Q711 284.5 702 284.5 Q693 284.5 691.5 276 Z"/><path d="M694 268 Q704 270 710 283 M710 267 Q700 270 696 283 M699 265.5 L702 268 L705 265.5"/></g>
<path d="M672.5 369 L672.5 378 L674.6 376 L676.2 379.5 L677.4 379 L675.8 375.6 L678.5 375.6 Z" fill="#111"/>
</g>
<rect x="0" y="579" width="863" height="18.5" fill="#808080"/>
<rect x="0" y="579" width="863" height="1" fill="#6e6e6e"/>
<line x1="512.5" y1="579" x2="512.5" y2="597" stroke="#3a3a55" stroke-width="1" stroke-dasharray="1.5 2"/>
<line x1="513" y1="75" x2="513" y2="93" stroke="#30304a" stroke-width="1.2"/>
<rect x="863" y="74" width="150" height="524" fill="#f0f0f0"/>
<defs><linearGradient id="tb" x1="0" y1="0" x2="0" y2="1"><stop offset="0" stop-color="#dfe8f3"/><stop offset="1" stop-color="#cdd9e8"/></linearGradient><linearGradient id="hd" x1="0" y1="0" x2="0" y2="1"><stop offset="0" stop-color="#f2f2f2"/><stop offset="1" stop-color="#c9c9c9"/></linearGradient></defs>
<rect x="866" y="74.3" width="147" height="10" fill="url(#tb)"/>
<text x="867.5" y="82.3" font-size="7.6" fill="#333" textLength="53" lengthAdjust="spacingAndGlyphs">Zasobnik domyślny</text>
<rect x="996.5" y="77" width="3" height="4" fill="#333"/>
<rect x="1004.5" y="75.8" width="8" height="7.6" fill="#d84848"/><path d="M1006.8 77.8 L1010.2 81.2 M1010.2 77.8 L1006.8 81.2" stroke="#fff" stroke-width="0.9"/>
<rect x="866" y="84.5" width="138.5" height="9" fill="url(#hd)" stroke="#bdbdbd" stroke-width="0.5"/>
<path d="M870.5 87.5 L874 87.5 L872.25 90.8 Z" fill="#222"/>
<text x="877.8" y="91.7" font-size="7.4" fill="#333" textLength="65" lengthAdjust="spacingAndGlyphs">Informacje o elemencie</text>
<rect x="996" y="86.0" width="7" height="6.3" fill="#fafafa" stroke="#ccc" stroke-width="0.4"/><path d="M998.3 88.0 L1000.7 90.5 M1000.7 88.0 L998.3 90.5" stroke="#222" stroke-width="0.9"/>
<text x="870.6" y="103.6" font-size="7.4" font-weight="bold" fill="#222" textLength="51.6" lengthAdjust="spacingAndGlyphs">Brak zaznaczenia</text>
<rect x="868" y="108" width="136" height="1" fill="#c4c4c4"/>
<rect x="1005" y="94" width="0.8" height="96" fill="#e2e2e2"/>
<rect x="1008.5" y="94" width="1.6" height="8.5" fill="#888"/>
<rect x="866" y="190.7" width="138.5" height="9" fill="url(#hd)" stroke="#bdbdbd" stroke-width="0.5"/>
<path d="M870.5 193.7 L874 193.7 L872.25 197.0 Z" fill="#222"/>
<text x="877.8" y="197.89999999999998" font-size="7.4" fill="#333" textLength="30" lengthAdjust="spacingAndGlyphs">Materiały</text>
<rect x="996" y="192.2" width="7" height="6.3" fill="#fafafa" stroke="#ccc" stroke-width="0.4"/><path d="M998.3 194.2 L1000.7 196.7 M1000.7 194.2 L998.3 196.7" stroke="#222" stroke-width="0.9"/>
<rect x="866.8" y="201.3" width="34.7" height="35.7" fill="#fff" stroke="#ccc" stroke-width="0.6"/>
<path d="M867.3 201.8 L901 236.5 L867.3 236.5 Z" fill="#a6b3bb"/>
<rect x="904.6" y="202" width="84.4" height="8.4" fill="#e8e8e8"/>
<text x="906" y="208.6" font-size="6.6" fill="#999" textLength="24" lengthAdjust="spacingAndGlyphs">Domyślny</text>
<g transform="translate(998,206)"><rect x="-2.5" y="-1" width="5" height="5" fill="#222"/><rect x="-1" y="-4" width="2" height="2" fill="#222"/><circle cx="0" cy="1.5" r="0.9" fill="#fff"/></g>
<g transform="translate(998,219)"><path d="M-4 -2 L0 -4 L4 -2 L4 3 L0 5 L-4 3 Z" fill="#333"/><circle cx="-2" cy="2.5" r="2.2" fill="#fff" stroke="#222" stroke-width="0.8"/></g>
<rect x="992" y="226" width="12" height="12" fill="#fff"/><path d="M992.5 226.5 L1004 238 L992.5 238 Z" fill="#a6b3bb"/>
<rect x="866" y="239" width="138" height="0.8" fill="#c8c8c8"/>
<rect x="867.5" y="243" width="25" height="10.5" fill="#f8f8f8"/>
<text x="869.5" y="250.8" font-size="6.8" fill="#222" textLength="20.5" lengthAdjust="spacingAndGlyphs">Zaznacz</text>
<rect x="894.5" y="244" width="20" height="9.5" fill="#e6e6e6"/>
<text x="895.8" y="251.6" font-size="6.8" fill="#222" textLength="17" lengthAdjust="spacingAndGlyphs">Edycja</text>
<g transform="translate(998,246)"><path d="M-3 4 L3 -3" stroke="#6a5020" stroke-width="1.8"/><path d="M2 -2 L4 -4" stroke="#222" stroke-width="1.5"/></g>
<rect x="866" y="254" width="138" height="16" fill="#ebebeb"/>
<g transform="translate(875,261.3)"><path d="M-3 0 L0 -3 L3 0 L0 3 Z" fill="none" stroke="#222" stroke-width="1.2"/></g>
<g transform="translate(887.2,261.3)"><path d="M-3 0 L0 -3 L3 0 L0 3 Z" fill="none" stroke="#bbb" stroke-width="1"/></g>
<g transform="translate(900,261.3)"><path d="M-4 0 L0 -4 L4 0 L3 0 L3 4 L-3 4 L-3 0 Z" fill="#fff" stroke="#222" stroke-width="1"/><rect x="-1" y="1" width="2" height="3" fill="#222"/></g>
<rect x="907.6" y="256.8" width="83.8" height="12" fill="#fff" stroke="#bbb" stroke-width="0.6"/>
<text x="909.5" y="265" font-size="6.8" fill="#222" textLength="20.5" lengthAdjust="spacingAndGlyphs">w modelu</text>
<path d="M985 261.5 L987.3 263.8 L989.6 261.5" fill="none" stroke="#777" stroke-width="0.6"/>
<g transform="translate(999,261.3)"><path d="M-3 -4 L1 -4 L4 0 L1 4 L-3 4 Z" fill="#222"/><rect x="-3" y="-2" width="3" height="4" fill="#5a8ad0"/></g>
<rect x="867.5" y="270" width="129" height="150" fill="#ffffff"/>
<rect x="997" y="270" width="7.5" height="150" fill="#f4f4f4"/>
<rect x="1000.6" y="278" width="1.4" height="10" fill="#777"/>
<clipPath id="swc"><rect x="867.5" y="270" width="110" height="149.5"/></clipPath><g clip-path="url(#swc)">
<rect x="868.6" y="270.1" width="27" height="27" fill="#e4e4e4"/>
<rect x="869.8" y="271.3" width="24.6" height="24.6" fill="#4a3328"/>
<path d="M894.4 290.8 L894.4 295.9 L889.3 295.9 Z" fill="#fff" opacity="0.9"/>
<rect x="896.3" y="270.1" width="27" height="27" fill="#e4e4e4"/>
<rect x="897.5" y="271.3" width="24.6" height="24.6" fill="#e2e2e2"/>
<path d="M922.1 290.8 L922.1 295.9 L917.0 295.9 Z" fill="#fff" opacity="0.9"/>
<rect x="924.1" y="270.1" width="27" height="27" fill="#e4e4e4"/>
<rect x="925.3" y="271.3" width="24.6" height="24.6" fill="#bdbdbd"/>
<path d="M949.9 271.3 L949.9 295.9 L925.3 295.9 Z" fill="#c9c9c9"/>
<path d="M949.9 290.8 L949.9 295.9 L944.8 295.9 Z" fill="#fff" opacity="0.9"/>
<rect x="951.2" y="270.1" width="27" height="27" fill="#e4e4e4"/>
<rect x="952.4" y="271.3" width="24.6" height="24.6" fill="#f5f5f5"/>
<path d="M977.0 290.8 L977.0 295.9 L971.9 295.9 Z" fill="#fff" opacity="0.9"/>
<rect x="868.6" y="297.8" width="27" height="27" fill="#e4e4e4"/>
<rect x="869.8" y="299.0" width="24.6" height="24.6" fill="#3fbf3f"/>
<path d="M894.4 299.0 L894.4 323.6 L869.8 323.6 Z" fill="#88d488"/>
<path d="M894.4 318.5 L894.4 323.6 L889.3 323.6 Z" fill="#fff" opacity="0.9"/>
<rect x="896.3" y="297.8" width="27" height="27" fill="#e4e4e4"/>
<rect x="897.5" y="299.0" width="24.6" height="24.6" fill="#f7f7f7"/>
<path d="M922.1 318.5 L922.1 323.6 L917.0 323.6 Z" fill="#fff" opacity="0.9"/>
<rect x="924.1" y="297.8" width="27" height="27" fill="#e4e4e4"/>
<rect x="925.3" y="299.0" width="24.6" height="24.6" fill="#e6e6e6"/>
<path d="M949.9 318.5 L949.9 323.6 L944.8 323.6 Z" fill="#fff" opacity="0.9"/>
<rect x="951.2" y="297.8" width="27" height="27" fill="#e4e4e4"/>
<rect x="952.4" y="299.0" width="24.6" height="24.6" fill="#e8e8e8"/>
<path d="M977.0 318.5 L977.0 323.6 L971.9 323.6 Z" fill="#fff" opacity="0.9"/>
<rect x="868.6" y="325.4" width="27" height="27" fill="#e4e4e4"/>
<rect x="869.8" y="326.6" width="24.6" height="24.6" fill="#b9a58f"/>
<path d="M894.4 346.1 L894.4 351.2 L889.3 351.2 Z" fill="#fff" opacity="0.9"/>
<rect x="896.3" y="325.4" width="27" height="27" fill="#e4e4e4"/>
<rect x="897.5" y="326.6" width="24.6" height="24.6" fill="#8a8a8a"/>
<path d="M922.1 346.1 L922.1 351.2 L917.0 351.2 Z" fill="#fff" opacity="0.9"/>
<rect x="924.1" y="325.4" width="27" height="27" fill="#e4e4e4"/>
<rect x="925.3" y="326.6" width="24.6" height="24.6" fill="#e3d5c3"/>
<path d="M949.9 346.1 L949.9 351.2 L944.8 351.2 Z" fill="#fff" opacity="0.9"/>
<rect x="951.2" y="325.4" width="27" height="27" fill="#e4e4e4"/>
<rect x="952.4" y="326.6" width="24.6" height="24.6" fill="#6f6ff5"/>
<path d="M977.0 346.1 L977.0 351.2 L971.9 351.2 Z" fill="#fff" opacity="0.9"/>
<rect x="868.6" y="352.7" width="27" height="27" fill="#e4e4e4"/>
<rect x="869.8" y="353.9" width="24.6" height="24.6" fill="#4a4a4a"/>
<path d="M894.4 373.4 L894.4 378.5 L889.3 378.5 Z" fill="#fff" opacity="0.9"/>
<rect x="896.3" y="352.7" width="27" height="27" fill="#e4e4e4"/>
<rect x="897.5" y="353.9" width="24.6" height="24.6" fill="#6f6ff5"/>
<path d="M922.1 373.4 L922.1 378.5 L917.0 378.5 Z" fill="#fff" opacity="0.9"/>
<rect x="924.1" y="352.7" width="27" height="27" fill="#e4e4e4"/>
<rect x="925.3" y="353.9" width="24.6" height="24.6" fill="#3c3c3c"/>
<path d="M949.9 373.4 L949.9 378.5 L944.8 378.5 Z" fill="#fff" opacity="0.9"/>
<rect x="951.2" y="352.7" width="27" height="27" fill="#e4e4e4"/>
<rect x="952.4" y="353.9" width="24.6" height="24.6" fill="#8e8e8e"/>
<path d="M977.0 373.4 L977.0 378.5 L971.9 378.5 Z" fill="#fff" opacity="0.9"/>
<rect x="868.6" y="380.3" width="27" height="27" fill="#e4e4e4"/>
<rect x="869.8" y="381.5" width="24.6" height="24.6" fill="#6e6e6e"/>
<path d="M894.4 401.0 L894.4 406.1 L889.3 406.1 Z" fill="#fff" opacity="0.9"/>
<rect x="896.3" y="380.3" width="27" height="27" fill="#e4e4e4"/>
<rect x="897.5" y="381.5" width="24.6" height="24.6" fill="#6c6c6c"/>
<path d="M922.1 401.0 L922.1 406.1 L917.0 406.1 Z" fill="#fff" opacity="0.9"/>
<rect x="924.1" y="380.3" width="27" height="27" fill="#e4e4e4"/>
<rect x="925.3" y="381.5" width="24.6" height="24.6" fill="#4a2818"/>
<path d="M949.9 401.0 L949.9 406.1 L944.8 406.1 Z" fill="#fff" opacity="0.9"/>
<rect x="951.2" y="380.3" width="27" height="27" fill="#e4e4e4"/>
<rect x="952.4" y="381.5" width="24.6" height="24.6" fill="#d8d8d8"/>
<path d="M977.0 401.0 L977.0 406.1 L971.9 406.1 Z" fill="#fff" opacity="0.9"/>
<rect x="868.6" y="407.2" width="27" height="27" fill="#e4e4e4"/>
<rect x="869.8" y="408.4" width="24.6" height="24.6" fill="#5c5c5c"/>
<path d="M894.4 427.9 L894.4 433.0 L889.3 433.0 Z" fill="#fff" opacity="0.9"/>
<rect x="896.3" y="407.2" width="27" height="27" fill="#e4e4e4"/>
<rect x="897.5" y="408.4" width="24.6" height="24.6" fill="#c8a870"/>
<path d="M922.1 427.9 L922.1 433.0 L917.0 433.0 Z" fill="#fff" opacity="0.9"/>
<rect x="924.1" y="407.2" width="27" height="27" fill="#e4e4e4"/>
<rect x="925.3" y="408.4" width="24.6" height="24.6" fill="#6a7080"/>
<path d="M949.9 427.9 L949.9 433.0 L944.8 433.0 Z" fill="#fff" opacity="0.9"/>
<rect x="951.2" y="407.2" width="27" height="27" fill="#e4e4e4"/>
<rect x="952.4" y="408.4" width="24.6" height="24.6" fill="#7a7258"/>
<path d="M977.0 427.9 L977.0 433.0 L971.9 433.0 Z" fill="#fff" opacity="0.9"/>
</g>
<rect x="866" y="422.3" width="138.5" height="9" fill="url(#hd)" stroke="#bdbdbd" stroke-width="0.5"/>
<path d="M871 424.8 L874 426.8 L871 428.8 Z" fill="#222"/>
<text x="877.8" y="429.5" font-size="7.4" fill="#333" textLength="32" lengthAdjust="spacingAndGlyphs">Komponenty</text>
<rect x="996" y="423.8" width="7" height="6.3" fill="#fafafa" stroke="#ccc" stroke-width="0.4"/><path d="M998.3 425.8 L1000.7 428.3 M1000.7 425.8 L998.3 428.3" stroke="#222" stroke-width="0.9"/>
<rect x="866" y="432.3" width="138.5" height="9" fill="url(#hd)" stroke="#bdbdbd" stroke-width="0.5"/>
<path d="M870.5 435.3 L874 435.3 L872.25 438.6 Z" fill="#222"/>
<text x="877.8" y="439.5" font-size="7.4" fill="#333" textLength="14.5" lengthAdjust="spacingAndGlyphs">Style</text>
<rect x="996" y="433.8" width="7" height="6.3" fill="#fafafa" stroke="#ccc" stroke-width="0.4"/><path d="M998.3 435.8 L1000.7 438.3 M1000.7 435.8 L998.3 438.3" stroke="#222" stroke-width="0.9"/>
<rect x="867.5" y="442.8" width="34" height="36.6" fill="#fff" stroke="#ccc" stroke-width="0.6"/>
<path d="M871 452 L880 447 L891 447 L891 474 L880 474 L871 470 Z" fill="#f4f4f4" stroke="#444" stroke-width="0.5"/><path d="M871 452 L880 447 L891 447 L882 452 Z" fill="#999"/><rect x="884" y="456" width="13" height="19" rx="3" fill="#b8cad8" stroke="#555" stroke-width="0.5"/><path d="M870 471 L891 480" stroke="#d04040" stroke-width="0.5"/>
<rect x="903.8" y="443" width="85.8" height="9.5" fill="#fff"/>
<text x="905.5" y="450.5" font-size="6.8" fill="#222" textLength="56" lengthAdjust="spacingAndGlyphs">Styl architektoniczny3</text>
<rect x="903.8" y="454" width="85.8" height="25.4" fill="#fff"/>
<text x="905.5" y="461.6" font-size="6.8" fill="#222" textLength="75" lengthAdjust="spacingAndGlyphs">Domyślne kolory powierzchni.</text>
<text x="905.5" y="468.4" font-size="6.8" fill="#222" textLength="52" lengthAdjust="spacingAndGlyphs">Krawędzie z obrysem.</text>
<text x="905.5" y="475.2" font-size="6.8" fill="#222" textLength="73" lengthAdjust="spacingAndGlyphs">Jasnoniebieskie niebo i szare</text>
<clipPath id="dsc"><rect x="903.8" y="454" width="85.8" height="25.4"/></clipPath><text x="905.5" y="482" font-size="6.8" fill="#222" clip-path="url(#dsc)">tło.</text>
<g transform="translate(998,447.7)"><rect x="-2.5" y="-1" width="5" height="5" fill="#222"/><rect x="-1" y="-4" width="2" height="2" fill="#222"/></g>
<g transform="translate(998,461.3)"><circle cx="-1" cy="1" r="3" fill="#fff" stroke="#333" stroke-width="1"/><path d="M-2 -1 L2 -4 L4 -2" fill="none" stroke="#8a8a40" stroke-width="1.4"/><rect x="2" y="-1" width="2.5" height="3" fill="#2020a0"/></g>
<g transform="translate(998,473.3)"><path d="M-3.5 -1 A3.5 3.5 0 0 1 3.5 -1 M3.5 1 A3.5 3.5 0 0 1 -3.5 1" fill="none" stroke="#888" stroke-width="0.9"/></g>
<rect x="866" y="481" width="138" height="0.8" fill="#c8c8c8"/>
<rect x="867.5" y="485.4" width="25.5" height="9.5" fill="#f8f8f8"/>
<text x="869.5" y="492.6" font-size="6.8" fill="#222" textLength="20.5" lengthAdjust="spacingAndGlyphs">Zaznacz</text>
<rect x="894.5" y="486" width="20.5" height="9" fill="#e6e6e6"/><text x="895.8" y="493.4" font-size="6.8" fill="#222" textLength="17.5" lengthAdjust="spacingAndGlyphs">Edycja</text>
<rect x="917" y="486" width="22.5" height="9" fill="#e6e6e6"/><text x="918.3" y="493.4" font-size="6.8" fill="#222" textLength="20" lengthAdjust="spacingAndGlyphs">Mieszaj</text>
<rect x="866" y="496" width="138" height="16" fill="#ebebeb"/>
<g transform="translate(875,503.2)"><path d="M-3 0 L0 -3 L3 0 L0 3 Z" fill="none" stroke="#bbb" stroke-width="1"/></g>
<g transform="translate(887.2,503.2)"><path d="M-3 0 L0 -3 L3 0 L0 3 Z" fill="none" stroke="#bbb" stroke-width="1"/></g>
<g transform="translate(900,503.2)"><path d="M-4 0 L0 -4 L4 0 L3 0 L3 4 L-3 4 L-3 0 Z" fill="#fff" stroke="#222" stroke-width="1"/><rect x="-1" y="1" width="2" height="3" fill="#222"/></g>
<rect x="907.6" y="498.7" width="83.8" height="12.1" fill="#fff" stroke="#bbb" stroke-width="0.6"/>
<text x="910" y="506.8" font-size="6.8" fill="#222" textLength="14" lengthAdjust="spacingAndGlyphs">Style</text>
<rect x="910" y="508.5" width="70" height="0.8" fill="#333"/>
<path d="M985 503.5 L987.3 505.8 L989.6 503.5" fill="none" stroke="#777" stroke-width="0.6"/>
<g transform="translate(999,503.2)"><path d="M-3 -4 L1 -4 L4 0 L1 4 L-3 4 Z" fill="#222"/><rect x="-3" y="-2" width="3" height="4" fill="#5a8ad0"/></g>
<rect x="866" y="512" width="139.5" height="86.4" fill="#fff"/>
<rect x="869.2" y="513" width="25.7" height="25.7" fill="#fdfdfd" stroke="#d8d8d8" stroke-width="0.6"/>
<path d="M876.2 519.0 L881.2 518.0 L881.2 528.0 L876.2 529.0 Z" fill="#7a9ec0"/>
<path d="M878.2 519.0 L889.2 517.0 L888.2 528.0 L878.2 530.0 Z" fill="#b89a70" stroke="#8a6a40" stroke-width="0.4"/>
<text x="870.2" y="535.5" font-size="6.5" fill="#222" textLength="23.5" lengthAdjust="spacingAndGlyphs">Linie pror</text>
<rect x="896.7" y="513" width="25.7" height="25.7" fill="#fdfdfd" stroke="#d8d8d8" stroke-width="0.6"/>
<path d="M903.7 519.0 L908.7 518.0 L908.7 528.0 L903.7 529.0 Z" fill="#7a9ec0"/>
<path d="M905.7 519.0 L916.7 517.0 L915.7 528.0 L905.7 530.0 Z" fill="#b89a70" stroke="#8a6a40" stroke-width="0.4"/>
<text x="897.7" y="535.5" font-size="6.5" fill="#222" textLength="23.5" lengthAdjust="spacingAndGlyphs">Modelow</text>
<rect x="924.3" y="513" width="25.7" height="25.7" fill="#fdfdfd" stroke="#d8d8d8" stroke-width="0.6"/>
<path d="M931.3 519.0 L936.3 518.0 L936.3 528.0 L931.3 529.0 Z" fill="#7a9ec0"/>
<path d="M933.3 519.0 L944.3 517.0 L943.3 528.0 L933.3 530.0 Z" fill="#b89a70" stroke="#8a6a40" stroke-width="0.4"/>
<text x="925.3" y="535.5" font-size="6.5" fill="#222" textLength="23.5" lengthAdjust="spacingAndGlyphs">Różne st</text>
<rect x="952.0" y="513" width="25.7" height="25.7" fill="#fdfdfd" stroke="#d8d8d8" stroke-width="0.6"/>
<path d="M959.0 519.0 L964.0 518.0 L964.0 528.0 L959.0 529.0 Z" fill="#7a9ec0"/>
<path d="M961.0 519.0 L972.0 517.0 L971.0 528.0 L961.0 530.0 Z" fill="#b89a70" stroke="#8a6a40" stroke-width="0.4"/>
<text x="953.0" y="535.5" font-size="6.5" fill="#222" textLength="23.5" lengthAdjust="spacingAndGlyphs">Style dor</text>
<rect x="979.3" y="513" width="25.7" height="25.7" fill="#fdfdfd" stroke="#d8d8d8" stroke-width="0.6"/>
<path d="M986.3 519.0 L991.3 518.0 L991.3 528.0 L986.3 529.0 Z" fill="#7a9ec0"/>
<path d="M988.3 519.0 L999.3 517.0 L998.3 528.0 L988.3 530.0 Z" fill="#b89a70" stroke="#8a6a40" stroke-width="0.4"/>
<text x="980.3" y="535.5" font-size="6.5" fill="#222" textLength="23.5" lengthAdjust="spacingAndGlyphs">Szkicowa</text>
<rect x="869.2" y="540.5" width="25.7" height="25.7" fill="#fdfdfd" stroke="#d8d8d8" stroke-width="0.6"/>
<path d="M876.2 546.5 L881.2 545.5 L881.2 555.5 L876.2 556.5 Z" fill="#7a9ec0"/>
<path d="M878.2 546.5 L889.2 544.5 L888.2 555.5 L878.2 557.5 Z" fill="#b89a70" stroke="#8a6a40" stroke-width="0.4"/>
<text x="870.2" y="563.0" font-size="6.5" fill="#222" textLength="23.5" lengthAdjust="spacingAndGlyphs">Zestaw k</text>
<rect x="896.7" y="540.5" width="25.7" height="25.7" fill="#fdfdfd" stroke="#d8d8d8" stroke-width="0.6"/>
<path d="M903.7 546.5 L908.7 545.5 L908.7 555.5 L903.7 556.5 Z" fill="#7a9ec0"/>
<path d="M905.7 546.5 L916.7 544.5 L915.7 555.5 L905.7 557.5 Z" fill="#b89a70" stroke="#8a6a40" stroke-width="0.4"/>
<text x="897.7" y="563.0" font-size="6.5" fill="#222" textLength="23.5" lengthAdjust="spacingAndGlyphs">Zwycięzc</text>
<rect x="0" y="597.5" width="1013" height="16.5" fill="#f0f0f0"/>
<g transform="translate(5,605.5)"><circle r="3.3" fill="none" stroke="#aaa" stroke-width="1"/><path d="M0 -2 L0 1.5" stroke="#aaa" stroke-width="1"/></g>
<g transform="translate(20.7,605.5)"><circle r="3.4" fill="#fff" stroke="#222" stroke-width="1.1"/><path d="M0 -2 L0 1.8" stroke="#222" stroke-width="1.2"/></g>
<rect x="31.2" y="603.5" width="0.8" height="4.5" fill="#888"/>
<text x="36.5" y="608.8" font-size="8" fill="#111" textLength="320" lengthAdjust="spacingAndGlyphs">Kliknij lub przeciągnij, aby zaznaczyć obiekty. Shift = Dodaj/Odejmij. Ctrl = Dodaj. Shift + Ctrl = Odejmij.</text>
<rect x="895" y="603" width="0.8" height="5" fill="#777"/>
<rect x="905.3" y="600.2" width="105.6" height="14" fill="#f0f0f0" stroke="#d8dce8" stroke-width="0.8"/>
</svg>
</body></html>
